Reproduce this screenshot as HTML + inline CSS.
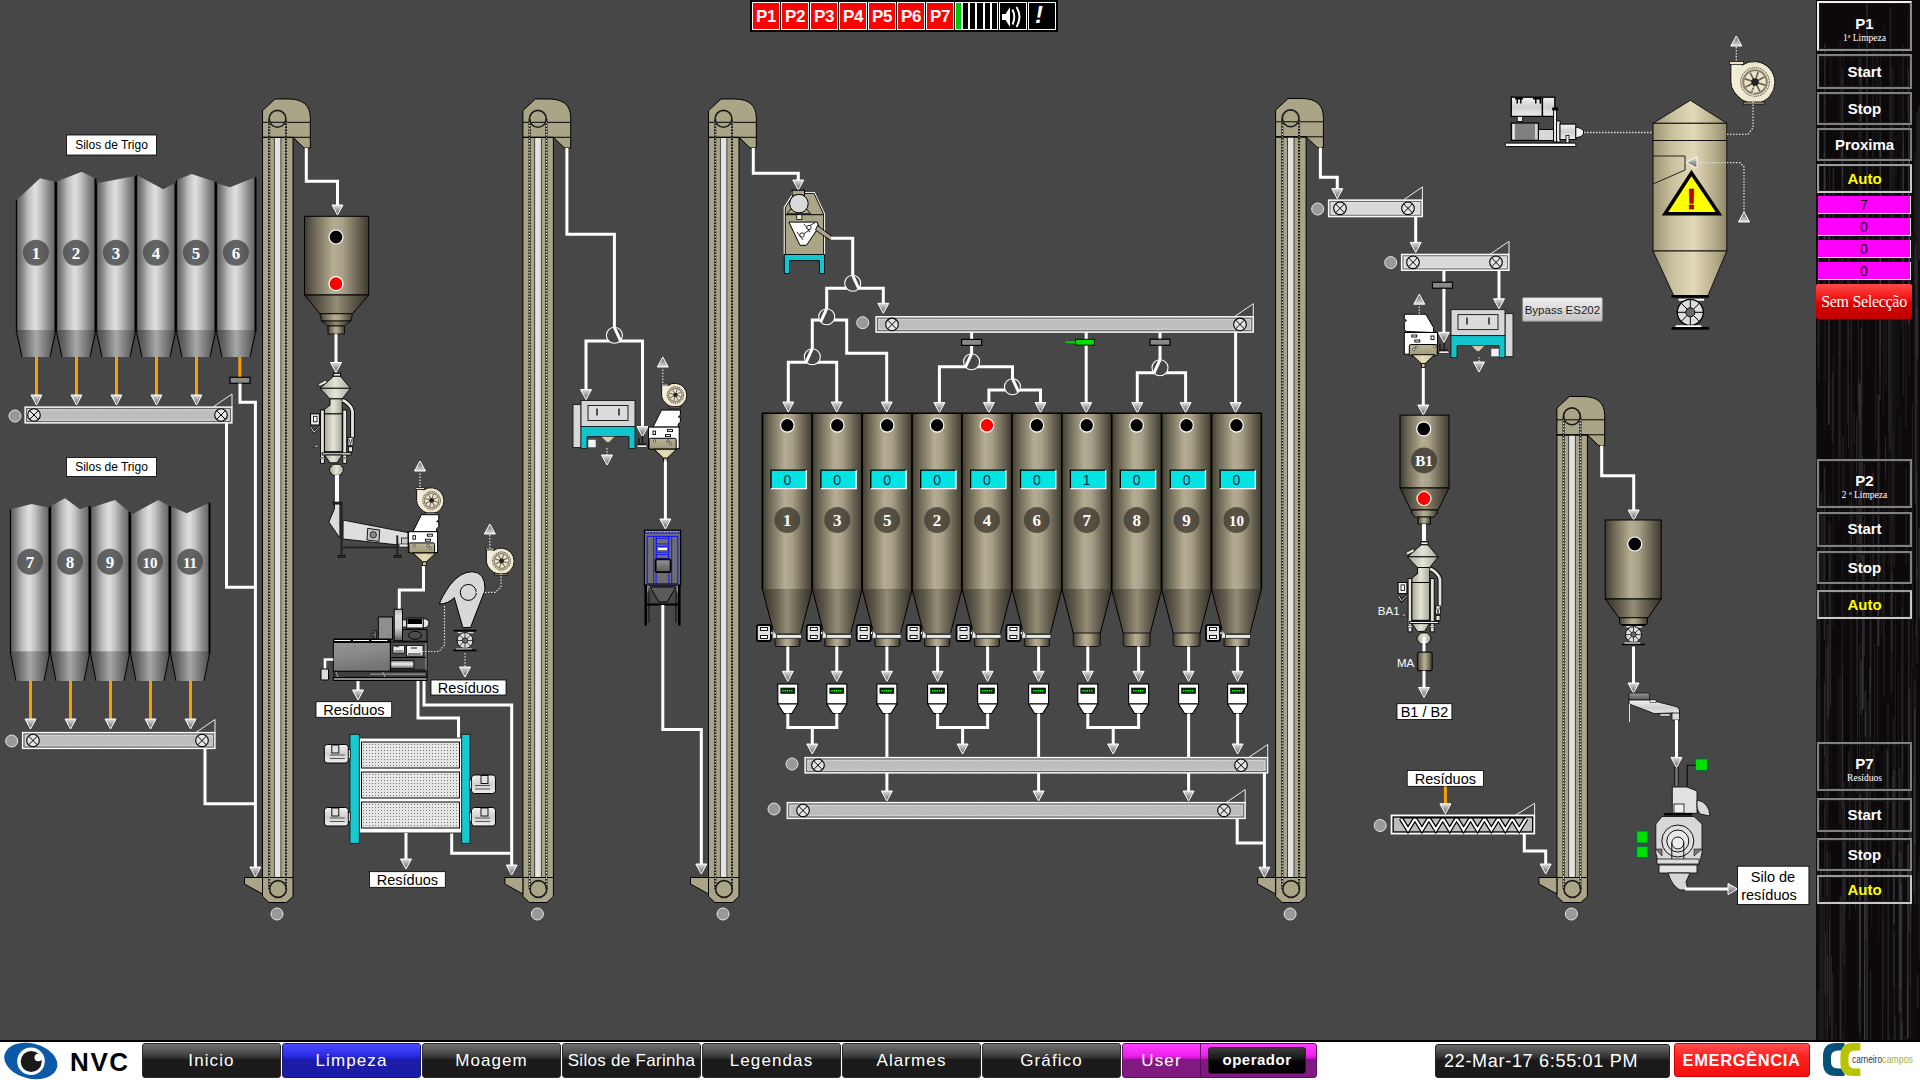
<!DOCTYPE html>
<html><head><meta charset="utf-8"><title>NVC Limpeza</title>
<style>
html,body{margin:0;padding:0;width:1920px;height:1080px;overflow:hidden;background:#474747;font-family:"Liberation Sans",sans-serif;}
#stage{position:absolute;left:0;top:0;width:1920px;height:1080px;}
svg{position:absolute;left:0;top:0;}
#topbar{position:absolute;left:750px;top:0;width:308px;height:32px;background:#000;}
.pb{position:absolute;top:2px;width:26px;height:26px;border:1px solid #fff;background:#f00;color:#fff;font:bold 17px/27px "Liberation Sans",sans-serif;text-align:center;letter-spacing:-0.5px;}
.lv{position:absolute;top:2px;width:5.1px;height:26px;border:1px solid #fff;background:#000;}
.lv.on{background:#00c800;}
.ib{position:absolute;top:2px;width:26px;height:26px;border:1px solid #fff;background:#000;overflow:hidden;}
.ib svg{position:absolute;left:0;top:0;}
#rpanel{position:absolute;left:1816px;top:0;width:104px;height:1040px;background-color:#0d090a;overflow:hidden;}
.rb{position:absolute;left:1817px;width:95px;box-sizing:border-box;border:2px solid #808080;background:transparent;color:#fff;font:bold 15px "Liberation Sans",sans-serif;text-align:center;box-shadow:inset 0 0 0 1px #1a1a1a;}
.rb.sel{border-color:#f0f0f0 #8a8a8a #8a8a8a #f0f0f0;}
.rb.sel2{border-color:#9a9a9a #c8c8c8 #c8c8c8 #9a9a9a;}
.rt{position:absolute;left:0;right:0;font:bold 15px/17px "Liberation Sans",sans-serif;}
.rs{position:absolute;left:0;right:0;font:9.5px/12px "Liberation Serif",serif;}
.mg{position:absolute;left:1818px;width:92px;height:17px;background:#ff00ff;border-right:1.5px solid #f4f4f4;border-bottom:1.5px solid #f4f4f4;color:#200020;font:14px/18px "Liberation Sans",sans-serif;text-align:center;}
#semsel{position:absolute;left:1816px;top:284px;width:96px;height:35px;border-radius:2px;background:linear-gradient(#ff4a4a 0%,#f01010 45%,#d80000 55%,#c00000 100%);color:#fff;font:16px/35px "Liberation Serif",serif;text-align:center;letter-spacing:-0.3px;}
#bbar{position:absolute;left:0;top:1040px;width:1920px;height:40px;background:#fff;border-top:2px solid #000;box-sizing:border-box;}
.nb{position:absolute;top:1043px;width:137px;height:33px;border:1px solid #2a2a2a;border-radius:3px;background:linear-gradient(#707070 0%,#505050 25%,#2c2c2c 44%,#1b1b1b 46%,#1b1b1b 100%);color:#fff;font:17px/34px "Liberation Sans",sans-serif;text-align:center;white-space:nowrap;}
.nb.blue{background:linear-gradient(#4a4aff 0%,#3030ee 30%,#2020c8 45%,#1c1ca8 47%,#1c1ca8 100%);border-color:#1a1a70;}
.nb.mag{background:linear-gradient(#ff40ff 0%,#ee20ee 35%,#c014c0 45%,#801a80 47%,#801a80 100%);border-color:#601060;}
.opdiv{position:absolute;left:77px;top:0;width:1px;height:33px;background:#5a0a5a;}
.op{position:absolute;left:85px;top:3px;width:96px;height:25px;border:1px solid #222;border-radius:3px;background:linear-gradient(#3a3a3a 0%,#1a1a1a 40%,#050005 55%,#050005 100%);color:#fff;font:bold 15px/24px "Liberation Sans",sans-serif;text-align:center;letter-spacing:0.5px;}
.datebox{position:absolute;left:1435px;top:1043.5px;width:233px;height:32px;border:1px solid #222;border-radius:3px;background:linear-gradient(#6a6a6a 0%,#4a4a4a 22%,#2a2a2a 42%,#1a1a1a 47%,#1a1a1a 100%);color:#fff;font:18px/33px "Liberation Sans",sans-serif;padding-left:8px;box-sizing:content-box;width:225px;letter-spacing:0.7px;}
.emerg{position:absolute;left:1673.5px;top:1043px;width:134px;height:32px;border:1px solid #d00;border-radius:3px;background:linear-gradient(#ff5050 0%,#ff2020 40%,#f01010 100%);color:#fff;font:bold 16.5px/33px "Liberation Sans",sans-serif;text-align:center;letter-spacing:0.6px;}

</style></head><body><div id="stage">
<svg width="1920" height="1080" viewBox="0 0 1920 1080" font-family="Liberation Sans">
<defs>
<linearGradient id="silv" x1="0" y1="0" x2="1" y2="0">
<stop offset="0" stop-color="#5e5e5e"/><stop offset="0.12" stop-color="#7c7c7c"/><stop offset="0.3" stop-color="#bdbdbd"/><stop offset="0.48" stop-color="#e0e0e0"/><stop offset="0.62" stop-color="#c4c4c4"/><stop offset="0.82" stop-color="#8a8a8a"/><stop offset="1" stop-color="#606060"/>
</linearGradient>
<linearGradient id="silvc" x1="0" y1="0" x2="1" y2="0">
<stop offset="0" stop-color="#4a4a4a"/><stop offset="0.2" stop-color="#666"/><stop offset="0.5" stop-color="#a8a8a8"/><stop offset="0.75" stop-color="#7a7a7a"/><stop offset="1" stop-color="#4a4a4a"/>
</linearGradient>
<linearGradient id="khak" x1="0" y1="0" x2="1" y2="0">
<stop offset="0" stop-color="#3f3c31"/><stop offset="0.15" stop-color="#6c6754"/><stop offset="0.45" stop-color="#b6ae93"/><stop offset="0.6" stop-color="#a8a087"/><stop offset="0.85" stop-color="#645f4e"/><stop offset="1" stop-color="#3d3a2f"/>
</linearGradient>
<linearGradient id="khakc" x1="0" y1="0" x2="1" y2="0">
<stop offset="0" stop-color="#36332a"/><stop offset="0.25" stop-color="#5d5849"/><stop offset="0.5" stop-color="#958d76"/><stop offset="0.75" stop-color="#5e594a"/><stop offset="1" stop-color="#35322a"/>
</linearGradient>
<linearGradient id="cream" x1="0" y1="0" x2="1" y2="0">
<stop offset="0" stop-color="#9c9272"/><stop offset="0.25" stop-color="#c8bf9d"/><stop offset="0.55" stop-color="#e2d9b8"/><stop offset="0.85" stop-color="#b4aa88"/><stop offset="1" stop-color="#8f8666"/>
</linearGradient>
<linearGradient id="arrg" x1="0" y1="0" x2="0" y2="1">
<stop offset="0" stop-color="#e0e0e0"/><stop offset="1" stop-color="#5c5c5c"/>
</linearGradient>
<linearGradient id="arrgu" x1="0" y1="1" x2="0" y2="0">
<stop offset="0" stop-color="#e0e0e0"/><stop offset="1" stop-color="#5c5c5c"/>
</linearGradient>
<linearGradient id="creamg" x1="0" y1="0" x2="1" y2="0">
<stop offset="0" stop-color="#9d9b8c"/><stop offset="0.45" stop-color="#e8e7dc"/><stop offset="1" stop-color="#a3a193"/>
</linearGradient>
<linearGradient id="fang" x1="0" y1="0" x2="1" y2="0">
<stop offset="0" stop-color="#f6f0da"/><stop offset="0.5" stop-color="#ebe4c8"/><stop offset="1" stop-color="#f2ecd6"/>
</linearGradient>
<linearGradient id="sepg" x1="0" y1="0" x2="1" y2="0">
<stop offset="0" stop-color="#a8a696"/><stop offset="0.5" stop-color="#e6e4d8"/><stop offset="1" stop-color="#a9a799"/>
</linearGradient>
<linearGradient id="panelg" x1="0" y1="0" x2="0" y2="1">
<stop offset="0" stop-color="#b8b494"/><stop offset="1" stop-color="#9e9a78"/>
</linearGradient>
<linearGradient id="funng" x1="0" y1="0" x2="1" y2="0">
<stop offset="0" stop-color="#cfc6a0"/><stop offset="0.5" stop-color="#e6ddb8"/><stop offset="1" stop-color="#c4bb94"/>
</linearGradient>
<linearGradient id="destg" x1="0" y1="0" x2="0.3" y2="1">
<stop offset="0" stop-color="#959595"/><stop offset="0.45" stop-color="#8a8a8a"/><stop offset="1" stop-color="#747474"/>
</linearGradient>
<linearGradient id="cylg" x1="0" y1="0" x2="0" y2="1">
<stop offset="0" stop-color="#777"/><stop offset="0.45" stop-color="#f2f2f2"/><stop offset="1" stop-color="#666"/>
</linearGradient>
<linearGradient id="diskg" x1="0" y1="0" x2="0" y2="1">
<stop offset="0" stop-color="#aaa"/><stop offset="0.2" stop-color="#ddd"/><stop offset="0.6" stop-color="#d0d0d0"/><stop offset="0.85" stop-color="#888"/><stop offset="1" stop-color="#555"/>
</linearGradient>
<linearGradient id="grayg" x1="0" y1="0" x2="0" y2="1">
<stop offset="0" stop-color="#999"/><stop offset="0.5" stop-color="#777"/><stop offset="1" stop-color="#5a5a5a"/>
</linearGradient>
<linearGradient id="motg" x1="0" y1="0" x2="0" y2="1">
<stop offset="0" stop-color="#f4f4f4"/><stop offset="0.5" stop-color="#cfcfcf"/><stop offset="1" stop-color="#eee"/>
</linearGradient>
<linearGradient id="btng" x1="0" y1="0" x2="0" y2="1">
<stop offset="0" stop-color="#f0f0f0"/><stop offset="1" stop-color="#c4c4c4"/>
</linearGradient>
<pattern id="dotpat" width="3" height="3" patternUnits="userSpaceOnUse">
<rect width="3" height="3" fill="#e6e6e6"/><rect width="1" height="1" fill="#777"/>
</pattern>
<pattern id="screwpat" width="1" height="1"><rect width="1" height="1" fill="none"/></pattern>
</defs>

<g stroke="#000" stroke-width="1">
<rect x="262.5" y="137.5" width="30.5" height="740" fill="#aba588"/>
</g>
<rect x="274.3" y="137.5" width="6.6" height="740" fill="#e2e2e2" stroke="#222" stroke-width="0.8"/>
<line x1="269.2" y1="119" x2="269.2" y2="888.5" stroke="#111" stroke-width="2"/>
<line x1="269.2" y1="119" x2="269.2" y2="888.5" stroke="#fff" stroke-width="1" stroke-dasharray="1.5 1.5"/>
<line x1="286" y1="119" x2="286" y2="888.5" stroke="#111" stroke-width="2"/>
<line x1="286" y1="119" x2="286" y2="888.5" stroke="#fff" stroke-width="1" stroke-dasharray="1.5 1.5"/>
<path d="M262.5,110.6 L275,99 L288.5,99 Q310.3,99 310.3,118 L310.3,148 L304.2,148 L293,137.3 L262.5,137.3 Z" fill="#aba588" stroke="#000" stroke-width="1"/>
<line x1="262.5" y1="122.3" x2="310.3" y2="122.3" stroke="#000" stroke-width="1"/>
<line x1="262.5" y1="137.3" x2="310.3" y2="137.3" stroke="#000" stroke-width="1"/>
<line x1="269.2" y1="119" x2="269.2" y2="137.5" stroke="#111" stroke-width="2"/>
<line x1="269.2" y1="119" x2="269.2" y2="137.5" stroke="#fff" stroke-width="1" stroke-dasharray="1.5 1.5"/>
<line x1="286" y1="119" x2="286" y2="137.5" stroke="#111" stroke-width="2"/>
<line x1="286" y1="119" x2="286" y2="137.5" stroke="#fff" stroke-width="1" stroke-dasharray="1.5 1.5"/>
<circle cx="277.5" cy="118.8" r="8.4" fill="none" stroke="#1a1a1a" stroke-width="1.6"/>
<path d="M262.5,877.5 L293,877.5 L293,896.5 L286.5,902.5 L269,902.5 L262.5,896.5 Z" fill="#aba588" stroke="#000" stroke-width="1"/>
<path d="M244.5,877.5 L262.5,877.5 L262.5,894 L244.5,884 Z" fill="#aba588" stroke="#000" stroke-width="1"/>
<line x1="269.2" y1="877.5" x2="269.2" y2="889" stroke="#111" stroke-width="2"/>
<line x1="269.2" y1="877.5" x2="269.2" y2="889" stroke="#fff" stroke-width="1" stroke-dasharray="1.5 1.5"/>
<line x1="286" y1="877.5" x2="286" y2="889" stroke="#111" stroke-width="2"/>
<line x1="286" y1="877.5" x2="286" y2="889" stroke="#fff" stroke-width="1" stroke-dasharray="1.5 1.5"/>
<circle cx="278" cy="889" r="8.4" fill="none" stroke="#1a1a1a" stroke-width="1.6"/>
<circle cx="277" cy="914" r="6" fill="#999" stroke="#e6e6e6" stroke-width="1"/>
<g stroke="#000" stroke-width="1">
<rect x="522.9" y="137.5" width="30.5" height="740" fill="#aba588"/>
</g>
<rect x="534.7" y="137.5" width="6.6" height="740" fill="#e2e2e2" stroke="#222" stroke-width="0.8"/>
<line x1="529.6" y1="119" x2="529.6" y2="888.5" stroke="#111" stroke-width="2"/>
<line x1="529.6" y1="119" x2="529.6" y2="888.5" stroke="#fff" stroke-width="1" stroke-dasharray="1.5 1.5"/>
<line x1="546.4" y1="119" x2="546.4" y2="888.5" stroke="#111" stroke-width="2"/>
<line x1="546.4" y1="119" x2="546.4" y2="888.5" stroke="#fff" stroke-width="1" stroke-dasharray="1.5 1.5"/>
<path d="M522.9,110.6 L535.4,99 L548.9,99 Q570.7,99 570.7,118 L570.7,148 L564.6,148 L553.4,137.3 L522.9,137.3 Z" fill="#aba588" stroke="#000" stroke-width="1"/>
<line x1="522.9" y1="122.3" x2="570.7" y2="122.3" stroke="#000" stroke-width="1"/>
<line x1="522.9" y1="137.3" x2="570.7" y2="137.3" stroke="#000" stroke-width="1"/>
<line x1="529.6" y1="119" x2="529.6" y2="137.5" stroke="#111" stroke-width="2"/>
<line x1="529.6" y1="119" x2="529.6" y2="137.5" stroke="#fff" stroke-width="1" stroke-dasharray="1.5 1.5"/>
<line x1="546.4" y1="119" x2="546.4" y2="137.5" stroke="#111" stroke-width="2"/>
<line x1="546.4" y1="119" x2="546.4" y2="137.5" stroke="#fff" stroke-width="1" stroke-dasharray="1.5 1.5"/>
<circle cx="537.9" cy="118.8" r="8.4" fill="none" stroke="#1a1a1a" stroke-width="1.6"/>
<path d="M522.9,877.5 L553.4,877.5 L553.4,896.5 L546.9,902.5 L529.4,902.5 L522.9,896.5 Z" fill="#aba588" stroke="#000" stroke-width="1"/>
<path d="M504.9,877.5 L522.9,877.5 L522.9,894 L504.9,884 Z" fill="#aba588" stroke="#000" stroke-width="1"/>
<line x1="529.6" y1="877.5" x2="529.6" y2="889" stroke="#111" stroke-width="2"/>
<line x1="529.6" y1="877.5" x2="529.6" y2="889" stroke="#fff" stroke-width="1" stroke-dasharray="1.5 1.5"/>
<line x1="546.4" y1="877.5" x2="546.4" y2="889" stroke="#111" stroke-width="2"/>
<line x1="546.4" y1="877.5" x2="546.4" y2="889" stroke="#fff" stroke-width="1" stroke-dasharray="1.5 1.5"/>
<circle cx="538.4" cy="889" r="8.4" fill="none" stroke="#1a1a1a" stroke-width="1.6"/>
<circle cx="537.4" cy="914" r="6" fill="#999" stroke="#e6e6e6" stroke-width="1"/>
<g stroke="#000" stroke-width="1">
<rect x="708.5" y="137.5" width="30.5" height="740" fill="#aba588"/>
</g>
<rect x="720.3" y="137.5" width="6.6" height="740" fill="#e2e2e2" stroke="#222" stroke-width="0.8"/>
<line x1="715.2" y1="119" x2="715.2" y2="888.5" stroke="#111" stroke-width="2"/>
<line x1="715.2" y1="119" x2="715.2" y2="888.5" stroke="#fff" stroke-width="1" stroke-dasharray="1.5 1.5"/>
<line x1="732" y1="119" x2="732" y2="888.5" stroke="#111" stroke-width="2"/>
<line x1="732" y1="119" x2="732" y2="888.5" stroke="#fff" stroke-width="1" stroke-dasharray="1.5 1.5"/>
<path d="M708.5,110.6 L721,99 L734.5,99 Q756.3,99 756.3,118 L756.3,148 L750.2,148 L739,137.3 L708.5,137.3 Z" fill="#aba588" stroke="#000" stroke-width="1"/>
<line x1="708.5" y1="122.3" x2="756.3" y2="122.3" stroke="#000" stroke-width="1"/>
<line x1="708.5" y1="137.3" x2="756.3" y2="137.3" stroke="#000" stroke-width="1"/>
<line x1="715.2" y1="119" x2="715.2" y2="137.5" stroke="#111" stroke-width="2"/>
<line x1="715.2" y1="119" x2="715.2" y2="137.5" stroke="#fff" stroke-width="1" stroke-dasharray="1.5 1.5"/>
<line x1="732" y1="119" x2="732" y2="137.5" stroke="#111" stroke-width="2"/>
<line x1="732" y1="119" x2="732" y2="137.5" stroke="#fff" stroke-width="1" stroke-dasharray="1.5 1.5"/>
<circle cx="723.5" cy="118.8" r="8.4" fill="none" stroke="#1a1a1a" stroke-width="1.6"/>
<path d="M708.5,877.5 L739,877.5 L739,896.5 L732.5,902.5 L715,902.5 L708.5,896.5 Z" fill="#aba588" stroke="#000" stroke-width="1"/>
<path d="M690.5,877.5 L708.5,877.5 L708.5,894 L690.5,884 Z" fill="#aba588" stroke="#000" stroke-width="1"/>
<line x1="715.2" y1="877.5" x2="715.2" y2="889" stroke="#111" stroke-width="2"/>
<line x1="715.2" y1="877.5" x2="715.2" y2="889" stroke="#fff" stroke-width="1" stroke-dasharray="1.5 1.5"/>
<line x1="732" y1="877.5" x2="732" y2="889" stroke="#111" stroke-width="2"/>
<line x1="732" y1="877.5" x2="732" y2="889" stroke="#fff" stroke-width="1" stroke-dasharray="1.5 1.5"/>
<circle cx="724" cy="889" r="8.4" fill="none" stroke="#1a1a1a" stroke-width="1.6"/>
<circle cx="723" cy="914" r="6" fill="#999" stroke="#e6e6e6" stroke-width="1"/>
<g stroke="#000" stroke-width="1">
<rect x="1275.6" y="137" width="30.5" height="740.5" fill="#aba588"/>
</g>
<rect x="1287.4" y="137" width="6.6" height="740.5" fill="#e2e2e2" stroke="#222" stroke-width="0.8"/>
<line x1="1282.3" y1="118.5" x2="1282.3" y2="888.5" stroke="#111" stroke-width="2"/>
<line x1="1282.3" y1="118.5" x2="1282.3" y2="888.5" stroke="#fff" stroke-width="1" stroke-dasharray="1.5 1.5"/>
<line x1="1299.1" y1="118.5" x2="1299.1" y2="888.5" stroke="#111" stroke-width="2"/>
<line x1="1299.1" y1="118.5" x2="1299.1" y2="888.5" stroke="#fff" stroke-width="1" stroke-dasharray="1.5 1.5"/>
<path d="M1275.6,110.1 L1288.1,98.5 L1301.6,98.5 Q1323.4,98.5 1323.4,117.5 L1323.4,147.5 L1317.3,147.5 L1306.1,136.8 L1275.6,136.8 Z" fill="#aba588" stroke="#000" stroke-width="1"/>
<line x1="1275.6" y1="121.8" x2="1323.4" y2="121.8" stroke="#000" stroke-width="1"/>
<line x1="1275.6" y1="136.8" x2="1323.4" y2="136.8" stroke="#000" stroke-width="1"/>
<line x1="1282.3" y1="118.5" x2="1282.3" y2="137" stroke="#111" stroke-width="2"/>
<line x1="1282.3" y1="118.5" x2="1282.3" y2="137" stroke="#fff" stroke-width="1" stroke-dasharray="1.5 1.5"/>
<line x1="1299.1" y1="118.5" x2="1299.1" y2="137" stroke="#111" stroke-width="2"/>
<line x1="1299.1" y1="118.5" x2="1299.1" y2="137" stroke="#fff" stroke-width="1" stroke-dasharray="1.5 1.5"/>
<circle cx="1290.6" cy="118.3" r="8.4" fill="none" stroke="#1a1a1a" stroke-width="1.6"/>
<path d="M1275.6,877.5 L1306.1,877.5 L1306.1,896.5 L1299.6,902.5 L1282.1,902.5 L1275.6,896.5 Z" fill="#aba588" stroke="#000" stroke-width="1"/>
<path d="M1257.6,877.5 L1275.6,877.5 L1275.6,894 L1257.6,884 Z" fill="#aba588" stroke="#000" stroke-width="1"/>
<line x1="1282.3" y1="877.5" x2="1282.3" y2="889" stroke="#111" stroke-width="2"/>
<line x1="1282.3" y1="877.5" x2="1282.3" y2="889" stroke="#fff" stroke-width="1" stroke-dasharray="1.5 1.5"/>
<line x1="1299.1" y1="877.5" x2="1299.1" y2="889" stroke="#111" stroke-width="2"/>
<line x1="1299.1" y1="877.5" x2="1299.1" y2="889" stroke="#fff" stroke-width="1" stroke-dasharray="1.5 1.5"/>
<circle cx="1291.1" cy="889" r="8.4" fill="none" stroke="#1a1a1a" stroke-width="1.6"/>
<circle cx="1290.1" cy="914" r="6" fill="#999" stroke="#e6e6e6" stroke-width="1"/>
<g stroke="#000" stroke-width="1">
<rect x="1556.9" y="435" width="30.5" height="442.5" fill="#aba588"/>
</g>
<rect x="1568.7" y="435" width="6.6" height="442.5" fill="#e2e2e2" stroke="#222" stroke-width="0.8"/>
<line x1="1563.6" y1="416.5" x2="1563.6" y2="888.5" stroke="#111" stroke-width="2"/>
<line x1="1563.6" y1="416.5" x2="1563.6" y2="888.5" stroke="#fff" stroke-width="1" stroke-dasharray="1.5 1.5"/>
<line x1="1580.4" y1="416.5" x2="1580.4" y2="888.5" stroke="#111" stroke-width="2"/>
<line x1="1580.4" y1="416.5" x2="1580.4" y2="888.5" stroke="#fff" stroke-width="1" stroke-dasharray="1.5 1.5"/>
<path d="M1556.9,408.1 L1569.4,396.5 L1582.9,396.5 Q1604.7,396.5 1604.7,415.5 L1604.7,445.5 L1598.6,445.5 L1587.4,434.8 L1556.9,434.8 Z" fill="#aba588" stroke="#000" stroke-width="1"/>
<line x1="1556.9" y1="419.8" x2="1604.7" y2="419.8" stroke="#000" stroke-width="1"/>
<line x1="1556.9" y1="434.8" x2="1604.7" y2="434.8" stroke="#000" stroke-width="1"/>
<line x1="1563.6" y1="416.5" x2="1563.6" y2="435" stroke="#111" stroke-width="2"/>
<line x1="1563.6" y1="416.5" x2="1563.6" y2="435" stroke="#fff" stroke-width="1" stroke-dasharray="1.5 1.5"/>
<line x1="1580.4" y1="416.5" x2="1580.4" y2="435" stroke="#111" stroke-width="2"/>
<line x1="1580.4" y1="416.5" x2="1580.4" y2="435" stroke="#fff" stroke-width="1" stroke-dasharray="1.5 1.5"/>
<circle cx="1571.9" cy="416.3" r="8.4" fill="none" stroke="#1a1a1a" stroke-width="1.6"/>
<path d="M1556.9,877.5 L1587.4,877.5 L1587.4,896.5 L1580.9,902.5 L1563.4,902.5 L1556.9,896.5 Z" fill="#aba588" stroke="#000" stroke-width="1"/>
<path d="M1538.9,877.5 L1556.9,877.5 L1556.9,894 L1538.9,884 Z" fill="#aba588" stroke="#000" stroke-width="1"/>
<line x1="1563.6" y1="877.5" x2="1563.6" y2="889" stroke="#111" stroke-width="2"/>
<line x1="1563.6" y1="877.5" x2="1563.6" y2="889" stroke="#fff" stroke-width="1" stroke-dasharray="1.5 1.5"/>
<line x1="1580.4" y1="877.5" x2="1580.4" y2="889" stroke="#111" stroke-width="2"/>
<line x1="1580.4" y1="877.5" x2="1580.4" y2="889" stroke="#fff" stroke-width="1" stroke-dasharray="1.5 1.5"/>
<circle cx="1572.4" cy="889" r="8.4" fill="none" stroke="#1a1a1a" stroke-width="1.6"/>
<circle cx="1571.4" cy="914" r="6" fill="#999" stroke="#e6e6e6" stroke-width="1"/>
<polygon points="16.5,330 16.7,200 40,178.3 55,181.7 55.5,330" fill="url(#silv)"/>
<polygon points="16.5,330 55.5,330 50,357 22,357" fill="url(#silvc)"/>
<line x1="16.5" y1="200" x2="16.5" y2="332" stroke="#000" stroke-width="1.3"/>
<line x1="55.5" y1="181.7" x2="55.5" y2="332" stroke="#000" stroke-width="2"/>
<polyline points="16.5,332 22,357" fill="none" stroke="#000" stroke-width="1"/>
<polyline points="55.5,332 50,357" fill="none" stroke="#000" stroke-width="1"/>
<circle cx="36" cy="252.7" r="13" fill="#4a4a4a" fill-opacity="0.82"/>
<text x="36" y="258.7" text-anchor="middle" font-family="Liberation Serif" font-weight="bold" font-size="17" fill="#fff">1</text>
<polygon points="56.5,330 56,181.7 81.7,171.7 95,178.3 95.5,330" fill="url(#silv)"/>
<polygon points="56.5,330 95.5,330 90,357 62,357" fill="url(#silvc)"/>
<line x1="56.5" y1="181.7" x2="56.5" y2="332" stroke="#000" stroke-width="1.3"/>
<line x1="95.5" y1="178.3" x2="95.5" y2="332" stroke="#000" stroke-width="2"/>
<polyline points="56.5,332 62,357" fill="none" stroke="#000" stroke-width="1"/>
<polyline points="95.5,332 90,357" fill="none" stroke="#000" stroke-width="1"/>
<circle cx="76" cy="252.7" r="13" fill="#4a4a4a" fill-opacity="0.82"/>
<text x="76" y="258.7" text-anchor="middle" font-family="Liberation Serif" font-weight="bold" font-size="17" fill="#fff">2</text>
<polygon points="96.5,330 96.7,183.3 135,176 135.5,330" fill="url(#silv)"/>
<polygon points="96.5,330 135.5,330 130,357 102,357" fill="url(#silvc)"/>
<line x1="96.5" y1="183.3" x2="96.5" y2="332" stroke="#000" stroke-width="1.3"/>
<line x1="135.5" y1="176" x2="135.5" y2="332" stroke="#000" stroke-width="2"/>
<polyline points="96.5,332 102,357" fill="none" stroke="#000" stroke-width="1"/>
<polyline points="135.5,332 130,357" fill="none" stroke="#000" stroke-width="1"/>
<circle cx="116" cy="252.7" r="13" fill="#4a4a4a" fill-opacity="0.82"/>
<text x="116" y="258.7" text-anchor="middle" font-family="Liberation Serif" font-weight="bold" font-size="17" fill="#fff">3</text>
<polygon points="136.5,330 136.7,175 163.3,189.3 175,183.3 175.5,330" fill="url(#silv)"/>
<polygon points="136.5,330 175.5,330 170,357 142,357" fill="url(#silvc)"/>
<line x1="136.5" y1="175" x2="136.5" y2="332" stroke="#000" stroke-width="1.3"/>
<line x1="175.5" y1="183.3" x2="175.5" y2="332" stroke="#000" stroke-width="2"/>
<polyline points="136.5,332 142,357" fill="none" stroke="#000" stroke-width="1"/>
<polyline points="175.5,332 170,357" fill="none" stroke="#000" stroke-width="1"/>
<circle cx="156" cy="252.7" r="13" fill="#4a4a4a" fill-opacity="0.82"/>
<text x="156" y="258.7" text-anchor="middle" font-family="Liberation Serif" font-weight="bold" font-size="17" fill="#fff">4</text>
<polygon points="176.5,330 176.7,180 191.7,174 215,181.7 215.5,330" fill="url(#silv)"/>
<polygon points="176.5,330 215.5,330 210,357 182,357" fill="url(#silvc)"/>
<line x1="176.5" y1="180" x2="176.5" y2="332" stroke="#000" stroke-width="1.3"/>
<line x1="215.5" y1="181.7" x2="215.5" y2="332" stroke="#000" stroke-width="2"/>
<polyline points="176.5,332 182,357" fill="none" stroke="#000" stroke-width="1"/>
<polyline points="215.5,332 210,357" fill="none" stroke="#000" stroke-width="1"/>
<circle cx="196" cy="252.7" r="13" fill="#4a4a4a" fill-opacity="0.82"/>
<text x="196" y="258.7" text-anchor="middle" font-family="Liberation Serif" font-weight="bold" font-size="17" fill="#fff">5</text>
<polygon points="216.5,330 216.7,183.3 230,187.3 255,177.3 255.5,330" fill="url(#silv)"/>
<polygon points="216.5,330 255.5,330 250,357 222,357" fill="url(#silvc)"/>
<line x1="216.5" y1="183.3" x2="216.5" y2="332" stroke="#000" stroke-width="1.3"/>
<line x1="255.5" y1="177.3" x2="255.5" y2="332" stroke="#000" stroke-width="2"/>
<polyline points="216.5,332 222,357" fill="none" stroke="#000" stroke-width="1"/>
<polyline points="255.5,332 250,357" fill="none" stroke="#000" stroke-width="1"/>
<circle cx="236" cy="252.7" r="13" fill="#4a4a4a" fill-opacity="0.82"/>
<text x="236" y="258.7" text-anchor="middle" font-family="Liberation Serif" font-weight="bold" font-size="17" fill="#fff">6</text>
<polygon points="10.5,651.7 10.7,509.3 31.7,504 49.3,507.7 49.5,651.7" fill="url(#silv)"/>
<polygon points="10.5,651.7 49.5,651.7 44,681 16,681" fill="url(#silvc)"/>
<line x1="10.5" y1="509.3" x2="10.5" y2="653.7" stroke="#000" stroke-width="1.3"/>
<line x1="49.5" y1="507.7" x2="49.5" y2="653.7" stroke="#000" stroke-width="2"/>
<polyline points="10.5,653.7 16,681" fill="none" stroke="#000" stroke-width="1"/>
<polyline points="49.5,653.7 44,681" fill="none" stroke="#000" stroke-width="1"/>
<circle cx="30" cy="561.7" r="13" fill="#4a4a4a" fill-opacity="0.82"/>
<text x="30" y="567.7" text-anchor="middle" font-family="Liberation Serif" font-weight="bold" font-size="17" fill="#fff">7</text>
<polygon points="50.5,651.7 50.7,506 65,498.3 80,509.3 89.3,506 89.5,651.7" fill="url(#silv)"/>
<polygon points="50.5,651.7 89.5,651.7 84,681 56,681" fill="url(#silvc)"/>
<line x1="50.5" y1="506" x2="50.5" y2="653.7" stroke="#000" stroke-width="1.3"/>
<line x1="89.5" y1="506" x2="89.5" y2="653.7" stroke="#000" stroke-width="2"/>
<polyline points="50.5,653.7 56,681" fill="none" stroke="#000" stroke-width="1"/>
<polyline points="89.5,653.7 84,681" fill="none" stroke="#000" stroke-width="1"/>
<circle cx="70" cy="561.7" r="13" fill="#4a4a4a" fill-opacity="0.82"/>
<text x="70" y="567.7" text-anchor="middle" font-family="Liberation Serif" font-weight="bold" font-size="17" fill="#fff">8</text>
<polygon points="90.5,651.7 90.7,507.7 115,500 129.3,511.7 129.5,651.7" fill="url(#silv)"/>
<polygon points="90.5,651.7 129.5,651.7 124,681 96,681" fill="url(#silvc)"/>
<line x1="90.5" y1="507.7" x2="90.5" y2="653.7" stroke="#000" stroke-width="1.3"/>
<line x1="129.5" y1="511.7" x2="129.5" y2="653.7" stroke="#000" stroke-width="2"/>
<polyline points="90.5,653.7 96,681" fill="none" stroke="#000" stroke-width="1"/>
<polyline points="129.5,653.7 124,681" fill="none" stroke="#000" stroke-width="1"/>
<circle cx="110" cy="561.7" r="13" fill="#4a4a4a" fill-opacity="0.82"/>
<text x="110" y="567.7" text-anchor="middle" font-family="Liberation Serif" font-weight="bold" font-size="17" fill="#fff">9</text>
<polygon points="130.5,651.7 130.7,515 158.3,500 169.3,506 169.5,651.7" fill="url(#silv)"/>
<polygon points="130.5,651.7 169.5,651.7 164,681 136,681" fill="url(#silvc)"/>
<line x1="130.5" y1="515" x2="130.5" y2="653.7" stroke="#000" stroke-width="1.3"/>
<line x1="169.5" y1="506" x2="169.5" y2="653.7" stroke="#000" stroke-width="2"/>
<polyline points="130.5,653.7 136,681" fill="none" stroke="#000" stroke-width="1"/>
<polyline points="169.5,653.7 164,681" fill="none" stroke="#000" stroke-width="1"/>
<circle cx="150" cy="561.7" r="13" fill="#4a4a4a" fill-opacity="0.82"/>
<text x="150" y="567.7" text-anchor="middle" font-family="Liberation Serif" font-weight="bold" font-size="15" fill="#fff">10</text>
<polygon points="170.5,651.7 170.7,506 186.7,513.3 209.3,502.7 209.5,651.7" fill="url(#silv)"/>
<polygon points="170.5,651.7 209.5,651.7 204,681 176,681" fill="url(#silvc)"/>
<line x1="170.5" y1="506" x2="170.5" y2="653.7" stroke="#000" stroke-width="1.3"/>
<line x1="209.5" y1="502.7" x2="209.5" y2="653.7" stroke="#000" stroke-width="2"/>
<polyline points="170.5,653.7 176,681" fill="none" stroke="#000" stroke-width="1"/>
<polyline points="209.5,653.7 204,681" fill="none" stroke="#000" stroke-width="1"/>
<circle cx="190" cy="561.7" r="13" fill="#4a4a4a" fill-opacity="0.82"/>
<text x="190" y="567.7" text-anchor="middle" font-family="Liberation Serif" font-weight="bold" font-size="15" fill="#fff">11</text>
<rect x="66.5" y="135" width="90" height="20" fill="#fff" stroke="#000" stroke-width="0.8"/>
<text x="111.5" y="149.32" text-anchor="middle" font-family="Liberation Sans" font-size="12" fill="#000">Silos de Trigo</text>
<rect x="66.5" y="457.5" width="90" height="19" fill="#fff" stroke="#000" stroke-width="0.8"/>
<text x="111.5" y="471.32" text-anchor="middle" font-family="Liberation Sans" font-size="12" fill="#000">Silos de Trigo</text>
<line x1="36.5" y1="357" x2="36.5" y2="396" stroke="#f5a000" stroke-width="3"/>
<polygon points="31,395 42,395 36.5,405" fill="url(#arrg)" stroke="#fff" stroke-width="1"/>
<line x1="76.5" y1="357" x2="76.5" y2="396" stroke="#f5a000" stroke-width="3"/>
<polygon points="71,395 82,395 76.5,405" fill="url(#arrg)" stroke="#fff" stroke-width="1"/>
<line x1="116.5" y1="357" x2="116.5" y2="396" stroke="#f5a000" stroke-width="3"/>
<polygon points="111,395 122,395 116.5,405" fill="url(#arrg)" stroke="#fff" stroke-width="1"/>
<line x1="156.5" y1="357" x2="156.5" y2="396" stroke="#f5a000" stroke-width="3"/>
<polygon points="151,395 162,395 156.5,405" fill="url(#arrg)" stroke="#fff" stroke-width="1"/>
<line x1="196.5" y1="357" x2="196.5" y2="396" stroke="#f5a000" stroke-width="3"/>
<polygon points="191,395 202,395 196.5,405" fill="url(#arrg)" stroke="#fff" stroke-width="1"/>
<line x1="239.8" y1="357" x2="239.8" y2="378" stroke="#f5a000" stroke-width="3"/>
<line x1="30.5" y1="681" x2="30.5" y2="720" stroke="#f5a000" stroke-width="3"/>
<polygon points="25,719 36,719 30.5,729" fill="url(#arrg)" stroke="#fff" stroke-width="1"/>
<line x1="70.5" y1="681" x2="70.5" y2="720" stroke="#f5a000" stroke-width="3"/>
<polygon points="65,719 76,719 70.5,729" fill="url(#arrg)" stroke="#fff" stroke-width="1"/>
<line x1="110.5" y1="681" x2="110.5" y2="720" stroke="#f5a000" stroke-width="3"/>
<polygon points="105,719 116,719 110.5,729" fill="url(#arrg)" stroke="#fff" stroke-width="1"/>
<line x1="150.5" y1="681" x2="150.5" y2="720" stroke="#f5a000" stroke-width="3"/>
<polygon points="145,719 156,719 150.5,729" fill="url(#arrg)" stroke="#fff" stroke-width="1"/>
<line x1="190.5" y1="681" x2="190.5" y2="720" stroke="#f5a000" stroke-width="3"/>
<polygon points="185,719 196,719 190.5,729" fill="url(#arrg)" stroke="#fff" stroke-width="1"/>
<rect x="25" y="407" width="207" height="16" fill="#bdbdbd" stroke="#fff" stroke-width="1.2"/>
<rect x="26.5" y="408.5" width="204" height="13" fill="none" stroke="#555" stroke-width="0.8"/>
<rect x="28" y="410" width="201" height="10" fill="none" stroke="#f4f4f4" stroke-width="0.8" stroke-dasharray="1 1.2"/>
<circle cx="34" cy="415" r="6.3" fill="#e4e4e4" stroke="#000" stroke-width="1.1"/>
<path d="M29.7,410.7 L38.3,419.3 M29.7,419.3 L38.3,410.7" stroke="#000" stroke-width="1"/>
<circle cx="221" cy="415" r="6.3" fill="#e4e4e4" stroke="#000" stroke-width="1.1"/>
<path d="M216.7,410.7 L225.3,419.3 M216.7,419.3 L225.3,410.7" stroke="#000" stroke-width="1"/>
<polyline points="213,407 232,394 232,407" fill="none" stroke="#eee" stroke-width="1"/>
<circle cx="15" cy="416" r="6" fill="#999" stroke="#e6e6e6" stroke-width="1"/>
<rect x="22.5" y="732.5" width="192.5" height="16" fill="#bdbdbd" stroke="#fff" stroke-width="1.2"/>
<rect x="24" y="734" width="189.5" height="13" fill="none" stroke="#555" stroke-width="0.8"/>
<rect x="25.5" y="735.5" width="186.5" height="10" fill="none" stroke="#f4f4f4" stroke-width="0.8" stroke-dasharray="1 1.2"/>
<circle cx="33" cy="740.5" r="6.3" fill="#e4e4e4" stroke="#000" stroke-width="1.1"/>
<path d="M28.7,736.2 L37.3,744.8 M28.7,744.8 L37.3,736.2" stroke="#000" stroke-width="1"/>
<circle cx="202" cy="740.5" r="6.3" fill="#e4e4e4" stroke="#000" stroke-width="1.1"/>
<path d="M197.7,736.2 L206.3,744.8 M197.7,744.8 L206.3,736.2" stroke="#000" stroke-width="1"/>
<polyline points="196,732.5 215,719.5 215,732.5" fill="none" stroke="#eee" stroke-width="1"/>
<circle cx="11.7" cy="741" r="6" fill="#999" stroke="#e6e6e6" stroke-width="1"/>
<rect x="230" y="377.3" width="20" height="6" fill="#888" stroke="#000" stroke-width="1.2" />
<polyline points="240,383.5 240,402.2 255.4,402.2 255.4,868" fill="none" stroke="#ffffff" stroke-width="3" stroke-linejoin="miter" stroke-linecap="butt"/>
<polygon points="249.9,867 260.9,867 255.4,877" fill="url(#arrg)" stroke="#fff" stroke-width="1"/>
<polyline points="226.5,423 226.5,587.2 255.4,587.2" fill="none" stroke="#ffffff" stroke-width="3" stroke-linejoin="miter" stroke-linecap="butt"/>
<polyline points="205,748.5 205,803.7 255.4,803.7" fill="none" stroke="#ffffff" stroke-width="3" stroke-linejoin="miter" stroke-linecap="butt"/>
<polyline points="306.3,148 306.3,181.3 337.5,181.3 337.5,206" fill="none" stroke="#ffffff" stroke-width="3" stroke-linejoin="miter" stroke-linecap="butt"/>
<polygon points="332,205 343,205 337.5,215" fill="url(#arrg)" stroke="#fff" stroke-width="1"/>
<rect x="304.5" y="216.3" width="64.2" height="78.7" fill="url(#khak)" stroke="#000" stroke-width="1" />
<polygon points="304.5,295 368.7,295 352.5,313.8 320,313.8" fill="url(#khakc)" stroke="#000" stroke-width="1" />
<polygon points="320,313.8 352.5,313.8 351,321 321.5,321" fill="url(#khak)" stroke="#000" stroke-width="0.8" />
<polygon points="321.5,321 351,321 344.5,326 328,326" fill="url(#khakc)" stroke="#000" stroke-width="0.8" />
<rect x="328" y="326" width="16.5" height="8" fill="url(#khak)" stroke="#000" stroke-width="0.8" />
<circle cx="336" cy="237" r="7" fill="#000" stroke="#fff" stroke-width="1.2"/>
<circle cx="336" cy="283.7" r="7" fill="#f00" stroke="#fff" stroke-width="1.2"/>
<polyline points="336,334 336,363.5" fill="none" stroke="#ffffff" stroke-width="3" stroke-linejoin="miter" stroke-linecap="butt"/>
<polygon points="330.5,362.5 341.5,362.5 336,372.5" fill="url(#arrg)" stroke="#fff" stroke-width="1"/>
<rect x="320.6" y="410" width="3.8" height="53.3" fill="#e4e3da" stroke="#000" stroke-width="0.9" />
<rect x="342.8" y="410" width="3.9" height="53.3" fill="#e4e3da" stroke="#000" stroke-width="0.9" />
<polygon points="333.8,376.1 340.2,376.1 350.6,388.3 320,388.3" fill="url(#sepg)" stroke="#000" stroke-width="0.9" />
<polygon points="320,388.3 350.6,388.3 342.2,398.9 330,398.9" fill="url(#sepg)" stroke="#000" stroke-width="0.9" />
<rect x="333.3" y="373.3" width="7.3" height="2.8" fill="#eee" stroke="#000" stroke-width="1" />
<polygon points="318,384.3 326,379.8 327,382.8 320,386.3" fill="#e8e8e0" stroke="#000" stroke-width="0.7" />
<polygon points="330,398.9 342.2,398.9 342.2,413.9 324.4,413.9 324.4,409.3 330,405.3" fill="url(#sepg)" stroke="#000" stroke-width="0.9" />
<rect x="324.4" y="413.9" width="17.8" height="37.8" fill="url(#sepg)" stroke="#000" stroke-width="1" />
<path d="M342.5,400.3 L345,401.3 Q352,406.3 352.5,411.3 V438.3" fill="none" stroke="#000" stroke-width="4.6"/>
<path d="M342.5,400.3 L345,401.3 Q352,406.3 352.5,411.3 V438.3" fill="none" stroke="#e6e5dc" stroke-width="2.8"/>
<rect x="348" y="437.3" width="5" height="8" fill="#eee" stroke="#000" stroke-width="0.8" />
<path d="M349,438.8 L350.5,444.3 L352,438.8" fill="none" stroke="#000" stroke-width="0.7"/>
<rect x="348.5" y="446.8" width="4" height="5" fill="#e6e6e6" stroke="#000" stroke-width="0.8" />
<rect x="310.6" y="413.9" width="8.8" height="11.1" fill="#eee" stroke="#000" stroke-width="1" />
<rect x="313.5" y="416.3" width="3.5" height="5.5" fill="#fff" stroke="#000" stroke-width="0.8" />
<path d="M311,427.3 L314,432.3 L319,427.3" fill="none" stroke="#000" stroke-width="2.2"/>
<path d="M311,427.3 L314,432.3 L319,427.3" fill="none" stroke="#eee" stroke-width="1"/>
<polygon points="313,447.3 318,444.3 318,447.3" fill="#bbb" stroke="#000" stroke-width="0.5" />
<rect x="322.2" y="452.8" width="28.9" height="2.2" fill="#f2f2f2" stroke="#000" stroke-width="0.9" />
<polygon points="324.4,455 342.2,455 337,462.8 330,462.8" fill="url(#sepg)" stroke="#000" stroke-width="0.9" />
<rect x="320.1" y="457.3" width="4.8" height="1.6" fill="#fff" stroke="#000" stroke-width="0.5" />
<rect x="342.3" y="457.3" width="4.8" height="1.6" fill="#fff" stroke="#000" stroke-width="0.5" />
<path d="M333,464.3 H340 L343.3,468.3 V471.3 L340,475.3 H333 L329.6,471.3 V468.3 Z" fill="url(#sepg)" stroke="#000" stroke-width="0.9"/>
<polyline points="337,475 337,502" fill="none" stroke="#ffffff" stroke-width="4" stroke-linejoin="miter" stroke-linecap="butt"/>
<rect x="333" y="502" width="9" height="2.2" fill="#333" stroke="#000" stroke-width="0.6" />
<polygon points="334.4,504 339.9,504 339.9,538.1 328.8,522 334.4,509" fill="#dcdcdc" stroke="#000" stroke-width="0.9" />
<polygon points="343.1,520.1 408,532.6 408,546 343,539" fill="#dedede" stroke="#000" stroke-width="0.9" />
<path d="M367.7,528.4 L379.7,530 L379,541.4 L367,540 Z" fill="#c4c4c4" stroke="#000" stroke-width="0.9"/>
<circle cx="373.3" cy="534.8" r="3.2" fill="#888" stroke="#000" stroke-width="0.7"/>
<line x1="341.5" y1="502" x2="341.5" y2="556.7" stroke="#222" stroke-width="2"/>
<line x1="343" y1="547.4" x2="397" y2="547.4" stroke="#222" stroke-width="1.6"/>
<line x1="397.3" y1="535.4" x2="397.3" y2="556.7" stroke="#222" stroke-width="2"/>
<rect x="338" y="555.3" width="7" height="2.2" fill="#333" stroke="#000" stroke-width="0.6" />
<rect x="394" y="555.3" width="7" height="2.2" fill="#333" stroke="#000" stroke-width="0.6" />
<rect x="401.5" y="538" width="6.5" height="7" fill="#c8c8c8" stroke="#000" stroke-width="0.7" />
<rect x="399" y="544" width="9" height="3" fill="#eee" stroke="#000" stroke-width="0.6" />
<path d="M412.9,531.7 L421.4,514.7 H438.8 V519.7 L436.6,521.7 H438.8 V526.7 L436.6,528.7 V531.7 Z" fill="#fff" stroke="#000" stroke-width="1"/>
<rect x="408.4" y="531.7" width="29.2" height="20.8" fill="#fff" stroke="#000" stroke-width="1" />
<rect x="412.9" y="535.7" width="2.5" height="3.5" fill="#fff" stroke="#000" stroke-width="0.9" />
<rect x="427.4" y="534.2" width="5" height="2" fill="#fff" stroke="#000" stroke-width="0.9" />
<rect x="425.4" y="539.2" width="5" height="2" fill="#fff" stroke="#000" stroke-width="0.9" />
<rect x="408.9" y="542.9" width="25.7" height="10" rx="1.5" fill="url(#panelg)" stroke="#000" stroke-width="1"/>
<circle cx="414.4" cy="545.7" r="1.2" fill="#fff" stroke="#000" stroke-width="0.6"/><circle cx="427.9" cy="545.7" r="1.2" fill="#fff" stroke="#000" stroke-width="0.6"/><circle cx="430.4" cy="548.2" r="1.2" fill="#fff" stroke="#000" stroke-width="0.6"/>
<polygon points="412.96,553 435.96,553 426.26,562 422.66,562" fill="url(#funng)" stroke="#000" stroke-width="1" />
<rect x="422.66" y="562" width="3.6" height="3.5" fill="#d9d0aa" stroke="#000" stroke-width="0.8" />
<path d="M416.65,488.96 H423.54 V490 A13 13 0 1 1 423.8,511.58 Q416.65,506.25 416.65,500.4 Z" fill="url(#fang)" stroke="#111" stroke-width="1"/>
<rect x="415.74" y="487.66" width="8.84" height="1.82" fill="#efe8d2" stroke="#111" stroke-width="0.8" />
<circle cx="431.6" cy="500.4" r="8.84" fill="#ede6cc" stroke="#222" stroke-width="0.9" stroke-dasharray="1.2 0.8"/>
<circle cx="431.6" cy="500.4" r="7.28" fill="none" stroke="#8a8270" stroke-width="1.3"/>
<path d="M433.09,500.86 L437.81,502.32 M432.33,501.78 L434.63,506.15 M431.14,501.89 L429.68,506.61 M430.22,501.13 L425.85,503.43 M430.11,499.94 L425.39,498.48 M430.87,499.02 L428.57,494.65 M432.06,498.91 L433.52,494.19 M432.98,499.67 L437.35,497.37" stroke="#6a6250" stroke-width="1.04"/>
<circle cx="431.6" cy="500.4" r="2.34" fill="#222"/>
<rect x="424.45" y="512.75" width="13" height="1.69" fill="#8a8270" stroke="#111" stroke-width="0.7" />
<polyline points="420,487 420,472" fill="none" stroke="#ddd" stroke-width="1.3" stroke-linejoin="miter" stroke-linecap="butt" stroke-dasharray="1.5 1.5"/>
<polygon points="414.5,471 425.5,471 420,461" fill="url(#arrgu)" stroke="#fff" stroke-width="1"/>
<polyline points="423.5,566 423.5,590 399.3,590 399.3,610" fill="none" stroke="#ffffff" stroke-width="3" stroke-linejoin="miter" stroke-linecap="butt"/>
<path d="M486.42,549.38 H493.42 V550.44 A13.2 13.2 0 1 1 493.68,572.35 Q486.42,566.94 486.42,561 Z" fill="url(#fang)" stroke="#111" stroke-width="1"/>
<rect x="485.5" y="548.06" width="8.98" height="1.85" fill="#efe8d2" stroke="#111" stroke-width="0.8" />
<circle cx="501.6" cy="561" r="8.98" fill="#ede6cc" stroke="#222" stroke-width="0.9" stroke-dasharray="1.2 0.8"/>
<circle cx="501.6" cy="561" r="7.39" fill="none" stroke="#8a8270" stroke-width="1.32"/>
<path d="M503.11,561.47 L507.91,562.95 M502.34,562.4 L504.68,566.84 M501.13,562.51 L499.65,567.31 M500.2,561.74 L495.76,564.08 M500.09,560.53 L495.29,559.05 M500.86,559.6 L498.52,555.16 M502.07,559.49 L503.55,554.69 M503,560.26 L507.44,557.92" stroke="#6a6250" stroke-width="1.06"/>
<circle cx="501.6" cy="561" r="2.38" fill="#222"/>
<rect x="494.34" y="573.54" width="13.2" height="1.72" fill="#8a8270" stroke="#111" stroke-width="0.7" />
<polygon points="484.3,534 495.3,534 489.8,524" fill="url(#arrgu)" stroke="#fff" stroke-width="1"/>
<polyline points="489.8,535 489.8,548" fill="none" stroke="#ddd" stroke-width="1.3" stroke-linejoin="miter" stroke-linecap="butt" stroke-dasharray="1.5 1.5"/>
<path d="M439.4,604 Q441,598 450,585 Q460,572 472,571.7 Q485.5,572 485,590 L470.5,627.5 H462.8 L454.3,597.6 Q448,604 439.4,604 Z" fill="#d8d8d8" stroke="#000" stroke-width="1"/>
<circle cx="468.3" cy="592.4" r="8" fill="none" stroke="#000" stroke-width="1"/>
<polyline points="470,592.4 495,592.4 501,587 501,572" fill="none" stroke="#ddd" stroke-width="1.2" stroke-linejoin="miter" stroke-linecap="butt" stroke-dasharray="1.5 1.5"/>
<rect x="453.31" y="629.85" width="23.38" height="1.72" fill="#000" stroke="none" stroke-width="0" rx="0.86"/>
<rect x="457.62" y="632.13" width="16" height="1.23" fill="#fff" stroke="none" stroke-width="0" rx="0.62"/>
<circle cx="465" cy="640.5" r="8" fill="#dcdcdc" stroke="#000" stroke-width="0.9"/>
<path d="M467.77,640.5 L473,640.5 M466.96,642.46 L470.66,646.16 M465,643.27 L465,648.5 M463.04,642.46 L459.34,646.16 M462.23,640.5 L457,640.5 M463.04,638.54 L459.34,634.84 M465,637.73 L465,632.5 M466.96,638.54 L470.66,634.84" stroke="#000" stroke-width="0.7"/>
<circle cx="465" cy="640.5" r="2.77" fill="#6a6a6a" stroke="#000" stroke-width="0.7"/>
<rect x="455.89" y="648.5" width="16" height="1.23" fill="#fff" stroke="none" stroke-width="0" rx="0.62"/>
<rect x="453.31" y="649.55" width="23.38" height="1.72" fill="#000" stroke="none" stroke-width="0" rx="0.86"/>
<polyline points="465,653 465,668" fill="none" stroke="#ddd" stroke-width="1.2" stroke-linejoin="miter" stroke-linecap="butt" stroke-dasharray="1.5 1.5"/>
<polygon points="459.5,667 470.5,667 465,677" fill="url(#arrg)" stroke="#fff" stroke-width="1"/>
<rect x="431" y="680" width="75" height="15" fill="#fff" stroke="#000" stroke-width="0.8"/>
<text x="468.5" y="692.72" text-anchor="middle" font-family="Liberation Sans" font-size="14.5" fill="#000">Resíduos</text>
<rect x="333.3" y="638.5" width="57.5" height="4" fill="#000" stroke="none" stroke-width="0" />
<line x1="334.5" y1="640.5" x2="390" y2="640.5" stroke="#fff" stroke-width="1.2" stroke-dasharray="16 2.5"/>
<rect x="333.3" y="642.5" width="57.1" height="28.8" fill="url(#destg)" stroke="#000" stroke-width="1"/>
<rect x="390.4" y="642" width="36.6" height="35.5" fill="#4c4c4c" stroke="#000" stroke-width="1" />
<line x1="426" y1="643" x2="426" y2="677" stroke="#bbb" stroke-width="0.8"/>
<rect x="393" y="645.5" width="11.5" height="7.5" fill="#ececec" stroke="#000" stroke-width="0.8" />
<path d="M394.5,647 l1.5,-1 1,1.2 1.2,-1.2 1,1.2 M394.5,651 H403" stroke="#000" stroke-width="0.7" fill="none"/>
<rect x="406.5" y="645.5" width="16.5" height="10.5" fill="#ececec" stroke="#000" stroke-width="0.8" />
<path d="M411,648 H417 M408,654 H421" stroke="#000" stroke-width="0.9" fill="none"/>
<line x1="391" y1="657.5" x2="426" y2="657.5" stroke="#000" stroke-width="1"/>
<rect x="390.8" y="660.4" width="23" height="7.9" fill="url(#cylg)" stroke="#000" stroke-width="0.8" />
<line x1="391" y1="670" x2="426" y2="670" stroke="#000" stroke-width="1"/>
<rect x="334" y="671.3" width="93" height="6.2" fill="#3e3e3e" stroke="#000" stroke-width="0.8" />
<path d="M336,672 l2,5 M383,672 l2,5" stroke="#aaa" stroke-width="1"/>
<rect x="370" y="673.5" width="55" height="1.5" fill="#888" stroke="none" stroke-width="0" />
<rect x="333.3" y="677.5" width="93.7" height="3" fill="#8a8a8a" stroke="#000" stroke-width="1" />
<rect x="378.3" y="617" width="14.2" height="22" fill="#8e8e8e" stroke="#000" stroke-width="1" />
<path d="M371,633.5 h3 v-3 h2.5 v8 h-2.5 v-2.5 h-3 Z" fill="#666" stroke="#000" stroke-width="0.6"/>
<rect x="394.2" y="609.2" width="8.3" height="31.6" fill="url(#diskg)" stroke="#000" stroke-width="1"/>
<rect x="402.5" y="620" width="4" height="7" fill="#ddd" stroke="#000" stroke-width="0.7" />
<rect x="406.7" y="618" width="16.6" height="10" fill="#f0f0f0" stroke="#000" stroke-width="1" />
<rect x="407.5" y="618.5" width="14.5" height="5.5" fill="#000" stroke="none" stroke-width="0" />
<path d="M423.3,618.5 Q429,619 429,623 Q429,627.5 423.3,628 Z" fill="#e6e6e6" stroke="#000" stroke-width="0.9"/>
<rect x="402.5" y="629.6" width="24.5" height="11.6" fill="#4c4c4c" stroke="#000" stroke-width="1" />
<ellipse cx="415" cy="635.3" rx="6.5" ry="4" fill="none" stroke="#000" stroke-width="1"/>
<polyline points="333.3,659.5 325,659.5 325,669" fill="none" stroke="#fff" stroke-width="2.6" stroke-linejoin="miter" stroke-linecap="butt"/>
<rect x="321" y="669" width="7.5" height="11" fill="#ddd" stroke="#000" stroke-width="1" rx="1"/>
<polyline points="444.5,606 444.5,645 439,651.5 414,651.5" fill="none" stroke="#ddd" stroke-width="1.2" stroke-linejoin="miter" stroke-linecap="butt" stroke-dasharray="1.5 1.5"/>
<polyline points="358,681 358,691" fill="none" stroke="#ffffff" stroke-width="3" stroke-linejoin="miter" stroke-linecap="butt"/>
<polygon points="352.5,690 363.5,690 358,700" fill="url(#arrg)" stroke="#fff" stroke-width="1"/>
<rect x="316" y="701.7" width="75.7" height="15.6" fill="#fff" stroke="#000" stroke-width="0.8"/>
<text x="353.85" y="714.72" text-anchor="middle" font-family="Liberation Sans" font-size="14.5" fill="#000">Resíduos</text>
<polyline points="418,681 418,718 458.5,718 458.5,738" fill="none" stroke="#ffffff" stroke-width="3" stroke-linejoin="miter" stroke-linecap="butt"/>
<polyline points="424,681 424,705 511.7,705 511.7,866" fill="none" stroke="#ffffff" stroke-width="3" stroke-linejoin="miter" stroke-linecap="butt"/>
<polygon points="506.2,865 517.2,865 511.7,875" fill="url(#arrg)" stroke="#fff" stroke-width="1"/>
<polyline points="451.7,833 451.7,853.3 511.7,853.3" fill="none" stroke="#ffffff" stroke-width="3" stroke-linejoin="miter" stroke-linecap="butt"/>
<rect x="359" y="738" width="103" height="95" fill="#fff" stroke="#333" stroke-width="1" />
<rect x="361.5" y="742" width="98" height="26" fill="url(#dotpat)" stroke="#000" stroke-width="1"/>
<rect x="361.5" y="772" width="98" height="26" fill="url(#dotpat)" stroke="#000" stroke-width="1"/>
<rect x="361.5" y="802" width="98" height="26" fill="url(#dotpat)" stroke="#000" stroke-width="1"/>
<rect x="350" y="734.3" width="9.3" height="109" fill="#16c8d0" stroke="#111" stroke-width="0.8" />
<rect x="461.7" y="734.3" width="8.3" height="109" fill="#16c8d0" stroke="#111" stroke-width="0.8" />
<rect x="324.3" y="744.5" width="24" height="18.5" fill="url(#motg)" stroke="#000" stroke-width="1" rx="3"/>
<rect x="331.8" y="745" width="7" height="8" fill="#e0e0e0" stroke="#000" stroke-width="0.9" />
<rect x="348.3" y="749.5" width="2" height="9" fill="#ccc" stroke="#000" stroke-width="0.6" />
<path d="M329.8,755 H344.8 M329.8,758.5 H344.8" stroke="#555" stroke-width="1.2"/>
<rect x="324.3" y="807.5" width="24" height="18.5" fill="url(#motg)" stroke="#000" stroke-width="1" rx="3"/>
<rect x="331.8" y="808" width="7" height="8" fill="#e0e0e0" stroke="#000" stroke-width="0.9" />
<rect x="348.3" y="812.5" width="2" height="9" fill="#ccc" stroke="#000" stroke-width="0.6" />
<path d="M329.8,818 H344.8 M329.8,821.5 H344.8" stroke="#555" stroke-width="1.2"/>
<rect x="471.5" y="775" width="24" height="18.5" fill="url(#motg)" stroke="#000" stroke-width="1" rx="3"/>
<rect x="481" y="775.5" width="7" height="8" fill="#e0e0e0" stroke="#000" stroke-width="0.9" />
<rect x="469.5" y="780" width="2" height="9" fill="#ccc" stroke="#000" stroke-width="0.6" />
<path d="M475,785.5 H490 M475,789 H490" stroke="#555" stroke-width="1.2"/>
<rect x="471.5" y="807.5" width="24" height="18.5" fill="url(#motg)" stroke="#000" stroke-width="1" rx="3"/>
<rect x="481" y="808" width="7" height="8" fill="#e0e0e0" stroke="#000" stroke-width="0.9" />
<rect x="469.5" y="812.5" width="2" height="9" fill="#ccc" stroke="#000" stroke-width="0.6" />
<path d="M475,818 H490 M475,821.5 H490" stroke="#555" stroke-width="1.2"/>
<polyline points="406,833 406,860" fill="none" stroke="#ffffff" stroke-width="3" stroke-linejoin="miter" stroke-linecap="butt"/>
<polygon points="400.5,859 411.5,859 406,869" fill="url(#arrg)" stroke="#fff" stroke-width="1"/>
<rect x="369.5" y="871.7" width="75.8" height="15.6" fill="#fff" stroke="#000" stroke-width="0.8"/>
<text x="407.4" y="884.72" text-anchor="middle" font-family="Liberation Sans" font-size="14.5" fill="#000">Resíduos</text>
<polyline points="566.9,148 566.9,234.3 614.4,234.3 614.4,327" fill="none" stroke="#ffffff" stroke-width="3" stroke-linejoin="miter" stroke-linecap="butt"/>
<polyline points="586,390.6 586,341 642.5,341 642.5,427.6" fill="none" stroke="#ffffff" stroke-width="3" stroke-linejoin="miter" stroke-linecap="butt"/>
<polygon points="580.5,389.6 591.5,389.6 586,399.6" fill="url(#arrg)" stroke="#fff" stroke-width="1"/>
<polygon points="637,426.6 648,426.6 642.5,436.6" fill="url(#arrg)" stroke="#fff" stroke-width="1"/>
<circle cx="614.4" cy="335.3" r="8" fill="#474747" stroke="#fff" stroke-width="1.1"/>
<line x1="614.4" y1="327.3" x2="620.4" y2="340.5" stroke="#fff" stroke-width="3"/>
<rect x="573" y="404.5" width="8" height="43" fill="#d8d8d8" stroke="#222" stroke-width="1" />
<rect x="581" y="400.5" width="54" height="26" fill="#d6d6d6" stroke="#222" stroke-width="1" />
<rect x="588" y="405.5" width="40" height="15" fill="#dcdcdc" stroke="#222" stroke-width="1" />
<line x1="597" y1="408.5" x2="597" y2="415.5" stroke="#222" stroke-width="1.5"/>
<line x1="619" y1="408.5" x2="619" y2="415.5" stroke="#222" stroke-width="1.5"/>
<path d="M581,426.5 H635 V448.5 H629 V436.5 H587 V448.5 H581 Z" fill="#12c4cc" stroke="#111" stroke-width="0.8"/>
<polygon points="601,436.5 615,436.5 609,442.5 607,442.5" fill="#d8cfa8" stroke="#333" stroke-width="0.6" />
<rect x="588" y="439.5" width="8" height="8" fill="#f4f4f4" stroke="#555" stroke-width="0.6" />
<polyline points="607,448 607,456" fill="none" stroke="#ddd" stroke-width="1.2" stroke-linejoin="miter" stroke-linecap="butt" stroke-dasharray="1.5 1.5"/>
<polygon points="601.5,455 612.5,455 607,465" fill="url(#arrg)" stroke="#fff" stroke-width="1"/>
<path d="M639,438 V444 H646 M642.5,436 V446" stroke="#111" stroke-width="1.2" fill="none"/>
<rect x="637" y="445" width="10" height="2.5" fill="#eee" stroke="#000" stroke-width="0.6" />
<path d="M653,427.1 L661.5,410.1 H680.4 V415.1 L678.2,417.1 H680.4 V422.1 L678.2,424.1 V427.1 Z" fill="#fff" stroke="#000" stroke-width="1"/>
<rect x="648.5" y="427.1" width="30.7" height="21.6" fill="#fff" stroke="#000" stroke-width="1" />
<rect x="653" y="431.1" width="2.5" height="3.5" fill="#fff" stroke="#000" stroke-width="0.9" />
<rect x="667.5" y="429.6" width="5" height="2" fill="#fff" stroke="#000" stroke-width="0.9" />
<rect x="665.5" y="434.6" width="5" height="2" fill="#fff" stroke="#000" stroke-width="0.9" />
<rect x="649" y="438.3" width="27.2" height="10.8" rx="1.5" fill="url(#panelg)" stroke="#000" stroke-width="1"/>
<circle cx="654.5" cy="441.1" r="1.2" fill="#fff" stroke="#000" stroke-width="0.6"/><circle cx="668" cy="441.1" r="1.2" fill="#fff" stroke="#000" stroke-width="0.6"/><circle cx="670.5" cy="443.6" r="1.2" fill="#fff" stroke="#000" stroke-width="0.6"/>
<polygon points="653.88,449.2 676.88,449.2 667.18,458.2 663.59,458.2" fill="url(#funng)" stroke="#000" stroke-width="1" />
<rect x="663.59" y="458.2" width="3.6" height="3.5" fill="#d9d0aa" stroke="#000" stroke-width="0.8" />
<path d="M661.6,384.44 H667.96 V385.4 A12 12 0 1 1 668.2,405.32 Q661.6,400.4 661.6,395 Z" fill="url(#fang)" stroke="#111" stroke-width="1"/>
<rect x="660.76" y="383.24" width="8.16" height="1.68" fill="#efe8d2" stroke="#111" stroke-width="0.8" />
<circle cx="675.4" cy="395" r="8.16" fill="#ede6cc" stroke="#222" stroke-width="0.9" stroke-dasharray="1.2 0.8"/>
<circle cx="675.4" cy="395" r="6.72" fill="none" stroke="#8a8270" stroke-width="1.2"/>
<path d="M676.78,395.43 L681.13,396.77 M676.07,396.27 L678.2,400.31 M674.97,396.38 L673.63,400.73 M674.13,395.67 L670.09,397.8 M674.02,394.57 L669.67,393.23 M674.73,393.73 L672.6,389.69 M675.83,393.62 L677.17,389.27 M676.67,394.33 L680.71,392.2" stroke="#6a6250" stroke-width="0.96"/>
<circle cx="675.4" cy="395" r="2.16" fill="#222"/>
<rect x="668.8" y="406.4" width="12" height="1.56" fill="#8a8270" stroke="#111" stroke-width="0.7" />
<polyline points="662.8,383 662.8,368" fill="none" stroke="#ddd" stroke-width="1.2" stroke-linejoin="miter" stroke-linecap="butt" stroke-dasharray="1.5 1.5"/>
<polygon points="657.3,367 668.3,367 662.8,357" fill="url(#arrgu)" stroke="#fff" stroke-width="1"/>
<polyline points="665.4,461 665.4,520" fill="none" stroke="#ffffff" stroke-width="3" stroke-linejoin="miter" stroke-linecap="butt"/>
<polygon points="659.9,519 670.9,519 665.4,529" fill="url(#arrg)" stroke="#fff" stroke-width="1"/>
<rect x="644.4" y="530.2" width="36.2" height="54.8" fill="#6e6e6e" stroke="#000" stroke-width="1.2" />
<line x1="646" y1="531.6" x2="679" y2="531.6" stroke="#bbb" stroke-width="1.2" stroke-dasharray="1.5 1.5"/>
<line x1="645" y1="533" x2="680" y2="533" stroke="#1515ff" stroke-width="1.1"/>
<rect x="647.2" y="536.4" width="30.6" height="47.2" fill="none" stroke="#1515ff" stroke-width="1.1" />
<path d="M653.7,536.4 V583.6 M656.1,536.4 V583.6 M668.9,536.4 V583.6 M671.7,536.4 V583.6" stroke="#1515ff" stroke-width="1"/>
<rect x="656.5" y="538.3" width="12" height="5.6" fill="#6e6e6e" stroke="#1515ff" stroke-width="1" />
<rect x="656.5" y="546.3" width="12" height="5.9" fill="#6e6e6e" stroke="#1515ff" stroke-width="1" />
<rect x="658" y="547.8" width="9" height="2.2" fill="#fff" stroke="none" stroke-width="0" />
<rect x="656.5" y="554.4" width="12" height="4" fill="none" stroke="#1515ff" stroke-width="1" />
<rect x="655.6" y="559.4" width="15" height="12.8" fill="url(#grayg)" stroke="#000" stroke-width="1.8" rx="1.5"/>
<path d="M645,585 L653,587 L647,593 Z M680,585 L672,587 L678,593 Z" fill="#888"/>
<polygon points="650,587 676,587 667,602 659,602" fill="#5a5a5a" stroke="#000" stroke-width="1" />
<path d="M645.7,585 V625.6 M679.3,585 V625.6" stroke="#000" stroke-width="2.6"/>
<path d="M645,604.4 H680" stroke="#000" stroke-width="2"/>
<path d="M649,588 V623 M676,588 V623" stroke="#000" stroke-width="0.8"/>
<polyline points="662.8,605 662.8,729.5 701.3,729.5 701.3,865" fill="none" stroke="#ffffff" stroke-width="3" stroke-linejoin="miter" stroke-linecap="butt"/>
<polygon points="695.8,864 706.8,864 701.3,874" fill="url(#arrg)" stroke="#fff" stroke-width="1"/>
<polyline points="753.3,148 753.3,173.3 798.3,173.3 798.3,181" fill="none" stroke="#ffffff" stroke-width="3" stroke-linejoin="miter" stroke-linecap="butt"/>
<polygon points="792.8,180 803.8,180 798.3,190" fill="url(#arrg)" stroke="#fff" stroke-width="1"/>
<path d="M784.3,254.5 V207.3 L792.1,195.3 V192.5 H814.4 L824.5,213.8 V254.5" fill="#aba588" stroke="#fff" stroke-width="1.2"/>
<path d="M785.3,254 V207.6 L792.8,196 M805,193.4 H814 L823.6,214 V254" fill="none" stroke="#000" stroke-width="0.9"/>
<rect x="792.1" y="190.2" width="12.5" height="5.1" fill="#aba588" stroke="#000" stroke-width="1" />
<line x1="785" y1="214.7" x2="824" y2="214.7" stroke="#000" stroke-width="1"/>
<polygon points="787,213.8 810.5,213.8 798.9,199" fill="#aba588" stroke="#000" stroke-width="0.9" />
<circle cx="798.9" cy="203.6" r="9.3" fill="#d9d9d9" stroke="#000" stroke-width="1"/>
<rect x="796.8" y="214.7" width="5.1" height="4.8" fill="#eee" stroke="#000" stroke-width="0.8" />
<polygon points="788.9,222.1 817.1,222.1 819,226.8 806.5,245.3 800,245.3" fill="#fff" stroke="#000" stroke-width="1" />
<path d="M806,228 L815,222.6 M800,236 L809,230.5 M804,224 L810,232 M797,232 L803,240" stroke="#000" stroke-width="0.8"/>
<circle cx="809" cy="227.5" r="2.2" fill="#fff" stroke="#000" stroke-width="0.8"/><circle cx="802" cy="235" r="2.2" fill="#fff" stroke="#000" stroke-width="0.8"/>
<polygon points="817.5,225.5 831.9,236.5 829.6,239.8 815.5,230" fill="#aba588" stroke="#000" stroke-width="0.9" />
<path d="M784.3,254.5 H824.5 V273.5 H819.4 V260.6 H789.5 V273.5 H784.3 Z" fill="#12c8d0" stroke="#000" stroke-width="0.9"/>
<polyline points="830.5,238.3 852.7,238.3 852.7,276" fill="none" stroke="#ffffff" stroke-width="3" stroke-linejoin="miter" stroke-linecap="butt"/>
<polyline points="826.7,309 826.7,288.3 883.3,288.3 883.3,304.3" fill="none" stroke="#ffffff" stroke-width="3" stroke-linejoin="miter" stroke-linecap="butt"/>
<polygon points="877.8,303.3 888.8,303.3 883.3,313.3" fill="url(#arrg)" stroke="#fff" stroke-width="1"/>
<circle cx="852.7" cy="283.3" r="8" fill="#474747" stroke="#fff" stroke-width="1.1"/>
<line x1="852.7" y1="275.3" x2="858.7" y2="288.5" stroke="#fff" stroke-width="3"/>
<polyline points="812.3,349 812.3,320 846.7,320 846.7,353.3 886.7,353.3 886.7,402.7" fill="none" stroke="#ffffff" stroke-width="3" stroke-linejoin="miter" stroke-linecap="butt"/>
<polygon points="881.2,402 892.2,402 886.7,412" fill="url(#arrg)" stroke="#fff" stroke-width="1"/>
<circle cx="826.7" cy="316.7" r="8" fill="#474747" stroke="#fff" stroke-width="1.1"/>
<line x1="826.7" y1="308.7" x2="820.7" y2="321.9" stroke="#fff" stroke-width="3"/>
<polyline points="788.3,402.7 788.3,362.3 836.7,362.3 836.7,402.7" fill="none" stroke="#ffffff" stroke-width="3" stroke-linejoin="miter" stroke-linecap="butt"/>
<polygon points="782.8,402 793.8,402 788.3,412" fill="url(#arrg)" stroke="#fff" stroke-width="1"/>
<polygon points="831.2,402 842.2,402 836.7,412" fill="url(#arrg)" stroke="#fff" stroke-width="1"/>
<circle cx="812.3" cy="356.7" r="8" fill="#474747" stroke="#fff" stroke-width="1.1"/>
<line x1="812.3" y1="348.7" x2="806.3" y2="361.9" stroke="#fff" stroke-width="3"/>
<rect x="876" y="316.7" width="377.3" height="15.5" fill="#bdbdbd" stroke="#fff" stroke-width="1.2"/>
<rect x="877.5" y="318.2" width="374.3" height="12.5" fill="none" stroke="#555" stroke-width="0.8"/>
<rect x="879" y="319.7" width="371.3" height="9.5" fill="none" stroke="#f4f4f4" stroke-width="0.8" stroke-dasharray="1 1.2"/>
<circle cx="892" cy="324.45" r="6.3" fill="#e4e4e4" stroke="#000" stroke-width="1.1"/>
<path d="M887.7,320.15 L896.3,328.75 M887.7,328.75 L896.3,320.15" stroke="#000" stroke-width="1"/>
<circle cx="1240" cy="324.45" r="6.3" fill="#e4e4e4" stroke="#000" stroke-width="1.1"/>
<path d="M1235.7,320.15 L1244.3,328.75 M1235.7,328.75 L1244.3,320.15" stroke="#000" stroke-width="1"/>
<polyline points="1234.3,316.7 1253.3,303.7 1253.3,316.7" fill="none" stroke="#eee" stroke-width="1"/>
<circle cx="862.7" cy="322.7" r="6" fill="#999" stroke="#e6e6e6" stroke-width="1"/>
<polyline points="971.6,332 971.6,356" fill="none" stroke="#ffffff" stroke-width="3" stroke-linejoin="miter" stroke-linecap="butt"/>
<rect x="961.6" y="339.4" width="20" height="6" fill="#888" stroke="#000" stroke-width="1.2" />
<polyline points="939.4,403 939.4,366.8 1012.5,366.8 1012.5,380" fill="none" stroke="#ffffff" stroke-width="3" stroke-linejoin="miter" stroke-linecap="butt"/>
<polygon points="933.9,402.6 944.9,402.6 939.4,412.6" fill="url(#arrg)" stroke="#fff" stroke-width="1"/>
<circle cx="971.6" cy="361.7" r="8" fill="#474747" stroke="#fff" stroke-width="1.1"/>
<line x1="971.6" y1="353.7" x2="965.6" y2="366.9" stroke="#fff" stroke-width="3"/>
<polyline points="988.9,403 988.9,390 1040.5,390 1040.5,403" fill="none" stroke="#ffffff" stroke-width="3" stroke-linejoin="miter" stroke-linecap="butt"/>
<polygon points="983.4,402.6 994.4,402.6 988.9,412.6" fill="url(#arrg)" stroke="#fff" stroke-width="1"/>
<polygon points="1035,402.6 1046,402.6 1040.5,412.6" fill="url(#arrg)" stroke="#fff" stroke-width="1"/>
<circle cx="1012.5" cy="386.7" r="8" fill="#474747" stroke="#fff" stroke-width="1.1"/>
<line x1="1012.5" y1="378.7" x2="1018.5" y2="391.9" stroke="#fff" stroke-width="3"/>
<polyline points="1086.2,332 1086.2,403" fill="none" stroke="#ffffff" stroke-width="3" stroke-linejoin="miter" stroke-linecap="butt"/>
<polygon points="1080.7,402.6 1091.7,402.6 1086.2,412.6" fill="url(#arrg)" stroke="#fff" stroke-width="1"/>
<rect x="1075.6" y="339.3" width="18.8" height="5.8" fill="#00e000" stroke="#111" stroke-width="1" />
<line x1="1065.6" y1="342.2" x2="1075.6" y2="342.2" stroke="#00e000" stroke-width="1.5"/>
<polyline points="1160,332 1160,362" fill="none" stroke="#ffffff" stroke-width="3" stroke-linejoin="miter" stroke-linecap="butt"/>
<rect x="1150" y="339.2" width="20" height="6" fill="#888" stroke="#000" stroke-width="1.2" />
<polyline points="1137.3,403 1137.3,372.7 1185.6,372.7 1185.6,403" fill="none" stroke="#ffffff" stroke-width="3" stroke-linejoin="miter" stroke-linecap="butt"/>
<polygon points="1131.8,402.6 1142.8,402.6 1137.3,412.6" fill="url(#arrg)" stroke="#fff" stroke-width="1"/>
<polygon points="1180.1,402.6 1191.1,402.6 1185.6,412.6" fill="url(#arrg)" stroke="#fff" stroke-width="1"/>
<circle cx="1160" cy="367.8" r="8" fill="#474747" stroke="#fff" stroke-width="1.1"/>
<line x1="1160" y1="359.8" x2="1154" y2="373" stroke="#fff" stroke-width="3"/>
<polyline points="1235.6,332 1235.6,403" fill="none" stroke="#ffffff" stroke-width="3" stroke-linejoin="miter" stroke-linecap="butt"/>
<polygon points="1230.1,402.6 1241.1,402.6 1235.6,412.6" fill="url(#arrg)" stroke="#fff" stroke-width="1"/>
<rect x="762.4" y="413.3" width="49.9" height="176" fill="url(#khak)" stroke="none" stroke-width="0" />
<polygon points="762.4,589.3 812.3,589.3 800.9,633 773.9,633" fill="url(#khakc)" stroke="none" stroke-width="0" />
<path d="M762.4,589.3 V413.3 H812.3 V589.3" fill="none" stroke="#000" stroke-width="1.6"/>
<path d="M762.4,589.3 L773.9,633 M812.3,589.3 L800.9,633" fill="none" stroke="#000" stroke-width="1"/>
<rect x="774.9" y="637.5" width="25" height="9" fill="url(#khak)" stroke="#111" stroke-width="1" rx="1.5"/>
<rect x="776.4" y="634.5" width="25" height="3.8" fill="#e8e8e8" stroke="#222" stroke-width="0.8" />
<polygon points="772.4,629 776.4,634.5 776.4,638.3 772.4,638.3" fill="#e8e8e8" stroke="#222" stroke-width="0.6" />
<rect x="756.9" y="625" width="14" height="16" fill="#e0e0e0" stroke="#000" stroke-width="1.8" rx="2"/>
<rect x="760.4" y="627.5" width="7" height="3" fill="#fff" stroke="#000" stroke-width="0.9" />
<rect x="760.4" y="635.5" width="7" height="3" fill="#fff" stroke="#000" stroke-width="0.9" />
<rect x="770.9" y="631.5" width="2" height="3" fill="#fff" stroke="#000" stroke-width="0.6" />
<circle cx="787.35" cy="425.3" r="6.8" fill="#000" stroke="#fff" stroke-width="1.2"/>
<rect x="771" y="470.2" width="35.3" height="18.5" fill="#00e4e4" stroke="none" stroke-width="0" />
<path d="M771,488.7 V470.2 H806.3" fill="none" stroke="#000" stroke-width="1.3"/>
<path d="M771,488.7 H806.3 V470.2" fill="none" stroke="#fff" stroke-width="1.3"/>
<text x="787.35" y="484.5" text-anchor="middle" font-size="14" fill="#003048">0</text>
<circle cx="787.35" cy="520" r="13" fill="#3e3a30" fill-opacity="0.78"/>
<text x="787.35" y="526" text-anchor="middle" font-family="Liberation Serif" font-weight="bold" font-size="17" fill="#fff">1</text>
<rect x="812.3" y="413.3" width="49.9" height="176" fill="url(#khak)" stroke="none" stroke-width="0" />
<polygon points="812.3,589.3 862.2,589.3 850.8,633 823.8,633" fill="url(#khakc)" stroke="none" stroke-width="0" />
<path d="M812.3,589.3 V413.3 H862.2 V589.3" fill="none" stroke="#000" stroke-width="1.6"/>
<path d="M812.3,589.3 L823.8,633 M862.2,589.3 L850.8,633" fill="none" stroke="#000" stroke-width="1"/>
<rect x="824.8" y="637.5" width="25" height="9" fill="url(#khak)" stroke="#111" stroke-width="1" rx="1.5"/>
<rect x="826.3" y="634.5" width="25" height="3.8" fill="#e8e8e8" stroke="#222" stroke-width="0.8" />
<polygon points="822.3,629 826.3,634.5 826.3,638.3 822.3,638.3" fill="#e8e8e8" stroke="#222" stroke-width="0.6" />
<rect x="806.8" y="625" width="14" height="16" fill="#e0e0e0" stroke="#000" stroke-width="1.8" rx="2"/>
<rect x="810.3" y="627.5" width="7" height="3" fill="#fff" stroke="#000" stroke-width="0.9" />
<rect x="810.3" y="635.5" width="7" height="3" fill="#fff" stroke="#000" stroke-width="0.9" />
<rect x="820.8" y="631.5" width="2" height="3" fill="#fff" stroke="#000" stroke-width="0.6" />
<circle cx="837.25" cy="425.3" r="6.8" fill="#000" stroke="#fff" stroke-width="1.2"/>
<rect x="820.9" y="470.2" width="35.3" height="18.5" fill="#00e4e4" stroke="none" stroke-width="0" />
<path d="M820.9,488.7 V470.2 H856.2" fill="none" stroke="#000" stroke-width="1.3"/>
<path d="M820.9,488.7 H856.2 V470.2" fill="none" stroke="#fff" stroke-width="1.3"/>
<text x="837.25" y="484.5" text-anchor="middle" font-size="14" fill="#003048">0</text>
<circle cx="837.25" cy="520" r="13" fill="#3e3a30" fill-opacity="0.78"/>
<text x="837.25" y="526" text-anchor="middle" font-family="Liberation Serif" font-weight="bold" font-size="17" fill="#fff">3</text>
<rect x="862.2" y="413.3" width="49.9" height="176" fill="url(#khak)" stroke="none" stroke-width="0" />
<polygon points="862.2,589.3 912.1,589.3 900.7,633 873.7,633" fill="url(#khakc)" stroke="none" stroke-width="0" />
<path d="M862.2,589.3 V413.3 H912.1 V589.3" fill="none" stroke="#000" stroke-width="1.6"/>
<path d="M862.2,589.3 L873.7,633 M912.1,589.3 L900.7,633" fill="none" stroke="#000" stroke-width="1"/>
<rect x="874.7" y="637.5" width="25" height="9" fill="url(#khak)" stroke="#111" stroke-width="1" rx="1.5"/>
<rect x="876.2" y="634.5" width="25" height="3.8" fill="#e8e8e8" stroke="#222" stroke-width="0.8" />
<polygon points="872.2,629 876.2,634.5 876.2,638.3 872.2,638.3" fill="#e8e8e8" stroke="#222" stroke-width="0.6" />
<rect x="856.7" y="625" width="14" height="16" fill="#e0e0e0" stroke="#000" stroke-width="1.8" rx="2"/>
<rect x="860.2" y="627.5" width="7" height="3" fill="#fff" stroke="#000" stroke-width="0.9" />
<rect x="860.2" y="635.5" width="7" height="3" fill="#fff" stroke="#000" stroke-width="0.9" />
<rect x="870.7" y="631.5" width="2" height="3" fill="#fff" stroke="#000" stroke-width="0.6" />
<circle cx="887.15" cy="425.3" r="6.8" fill="#000" stroke="#fff" stroke-width="1.2"/>
<rect x="870.8" y="470.2" width="35.3" height="18.5" fill="#00e4e4" stroke="none" stroke-width="0" />
<path d="M870.8,488.7 V470.2 H906.1" fill="none" stroke="#000" stroke-width="1.3"/>
<path d="M870.8,488.7 H906.1 V470.2" fill="none" stroke="#fff" stroke-width="1.3"/>
<text x="887.15" y="484.5" text-anchor="middle" font-size="14" fill="#003048">0</text>
<circle cx="887.15" cy="520" r="13" fill="#3e3a30" fill-opacity="0.78"/>
<text x="887.15" y="526" text-anchor="middle" font-family="Liberation Serif" font-weight="bold" font-size="17" fill="#fff">5</text>
<rect x="912.1" y="413.3" width="49.9" height="176" fill="url(#khak)" stroke="none" stroke-width="0" />
<polygon points="912.1,589.3 962,589.3 950.6,633 923.6,633" fill="url(#khakc)" stroke="none" stroke-width="0" />
<path d="M912.1,589.3 V413.3 H962 V589.3" fill="none" stroke="#000" stroke-width="1.6"/>
<path d="M912.1,589.3 L923.6,633 M962,589.3 L950.6,633" fill="none" stroke="#000" stroke-width="1"/>
<rect x="924.6" y="637.5" width="25" height="9" fill="url(#khak)" stroke="#111" stroke-width="1" rx="1.5"/>
<rect x="926.1" y="634.5" width="25" height="3.8" fill="#e8e8e8" stroke="#222" stroke-width="0.8" />
<polygon points="922.1,629 926.1,634.5 926.1,638.3 922.1,638.3" fill="#e8e8e8" stroke="#222" stroke-width="0.6" />
<rect x="906.6" y="625" width="14" height="16" fill="#e0e0e0" stroke="#000" stroke-width="1.8" rx="2"/>
<rect x="910.1" y="627.5" width="7" height="3" fill="#fff" stroke="#000" stroke-width="0.9" />
<rect x="910.1" y="635.5" width="7" height="3" fill="#fff" stroke="#000" stroke-width="0.9" />
<rect x="920.6" y="631.5" width="2" height="3" fill="#fff" stroke="#000" stroke-width="0.6" />
<circle cx="937.05" cy="425.3" r="6.8" fill="#000" stroke="#fff" stroke-width="1.2"/>
<rect x="920.7" y="470.2" width="35.3" height="18.5" fill="#00e4e4" stroke="none" stroke-width="0" />
<path d="M920.7,488.7 V470.2 H956" fill="none" stroke="#000" stroke-width="1.3"/>
<path d="M920.7,488.7 H956 V470.2" fill="none" stroke="#fff" stroke-width="1.3"/>
<text x="937.05" y="484.5" text-anchor="middle" font-size="14" fill="#003048">0</text>
<circle cx="937.05" cy="520" r="13" fill="#3e3a30" fill-opacity="0.78"/>
<text x="937.05" y="526" text-anchor="middle" font-family="Liberation Serif" font-weight="bold" font-size="17" fill="#fff">2</text>
<rect x="962" y="413.3" width="49.9" height="176" fill="url(#khak)" stroke="none" stroke-width="0" />
<polygon points="962,589.3 1011.9,589.3 1000.5,633 973.5,633" fill="url(#khakc)" stroke="none" stroke-width="0" />
<path d="M962,589.3 V413.3 H1011.9 V589.3" fill="none" stroke="#000" stroke-width="1.6"/>
<path d="M962,589.3 L973.5,633 M1011.9,589.3 L1000.5,633" fill="none" stroke="#000" stroke-width="1"/>
<rect x="974.5" y="637.5" width="25" height="9" fill="url(#khak)" stroke="#111" stroke-width="1" rx="1.5"/>
<rect x="976" y="634.5" width="25" height="3.8" fill="#e8e8e8" stroke="#222" stroke-width="0.8" />
<polygon points="972,629 976,634.5 976,638.3 972,638.3" fill="#e8e8e8" stroke="#222" stroke-width="0.6" />
<rect x="956.5" y="625" width="14" height="16" fill="#e0e0e0" stroke="#000" stroke-width="1.8" rx="2"/>
<rect x="960" y="627.5" width="7" height="3" fill="#fff" stroke="#000" stroke-width="0.9" />
<rect x="960" y="635.5" width="7" height="3" fill="#fff" stroke="#000" stroke-width="0.9" />
<rect x="970.5" y="631.5" width="2" height="3" fill="#fff" stroke="#000" stroke-width="0.6" />
<circle cx="986.95" cy="425.3" r="6.8" fill="#f00" stroke="#fff" stroke-width="1.2"/>
<rect x="970.6" y="470.2" width="35.3" height="18.5" fill="#00e4e4" stroke="none" stroke-width="0" />
<path d="M970.6,488.7 V470.2 H1005.9" fill="none" stroke="#000" stroke-width="1.3"/>
<path d="M970.6,488.7 H1005.9 V470.2" fill="none" stroke="#fff" stroke-width="1.3"/>
<text x="986.95" y="484.5" text-anchor="middle" font-size="14" fill="#003048">0</text>
<circle cx="986.95" cy="520" r="13" fill="#3e3a30" fill-opacity="0.78"/>
<text x="986.95" y="526" text-anchor="middle" font-family="Liberation Serif" font-weight="bold" font-size="17" fill="#fff">4</text>
<rect x="1011.9" y="413.3" width="49.9" height="176" fill="url(#khak)" stroke="none" stroke-width="0" />
<polygon points="1011.9,589.3 1061.8,589.3 1050.4,633 1023.4,633" fill="url(#khakc)" stroke="none" stroke-width="0" />
<path d="M1011.9,589.3 V413.3 H1061.8 V589.3" fill="none" stroke="#000" stroke-width="1.6"/>
<path d="M1011.9,589.3 L1023.4,633 M1061.8,589.3 L1050.4,633" fill="none" stroke="#000" stroke-width="1"/>
<rect x="1024.4" y="637.5" width="25" height="9" fill="url(#khak)" stroke="#111" stroke-width="1" rx="1.5"/>
<rect x="1025.9" y="634.5" width="25" height="3.8" fill="#e8e8e8" stroke="#222" stroke-width="0.8" />
<polygon points="1021.9,629 1025.9,634.5 1025.9,638.3 1021.9,638.3" fill="#e8e8e8" stroke="#222" stroke-width="0.6" />
<rect x="1006.4" y="625" width="14" height="16" fill="#e0e0e0" stroke="#000" stroke-width="1.8" rx="2"/>
<rect x="1009.9" y="627.5" width="7" height="3" fill="#fff" stroke="#000" stroke-width="0.9" />
<rect x="1009.9" y="635.5" width="7" height="3" fill="#fff" stroke="#000" stroke-width="0.9" />
<rect x="1020.4" y="631.5" width="2" height="3" fill="#fff" stroke="#000" stroke-width="0.6" />
<circle cx="1036.85" cy="425.3" r="6.8" fill="#000" stroke="#fff" stroke-width="1.2"/>
<rect x="1020.5" y="470.2" width="35.3" height="18.5" fill="#00e4e4" stroke="none" stroke-width="0" />
<path d="M1020.5,488.7 V470.2 H1055.8" fill="none" stroke="#000" stroke-width="1.3"/>
<path d="M1020.5,488.7 H1055.8 V470.2" fill="none" stroke="#fff" stroke-width="1.3"/>
<text x="1036.85" y="484.5" text-anchor="middle" font-size="14" fill="#003048">0</text>
<circle cx="1036.85" cy="520" r="13" fill="#3e3a30" fill-opacity="0.78"/>
<text x="1036.85" y="526" text-anchor="middle" font-family="Liberation Serif" font-weight="bold" font-size="17" fill="#fff">6</text>
<rect x="1061.8" y="413.3" width="49.9" height="176" fill="url(#khak)" stroke="none" stroke-width="0" />
<polygon points="1061.8,589.3 1111.7,589.3 1100.3,633 1073.3,633" fill="url(#khakc)" stroke="none" stroke-width="0" />
<path d="M1061.8,589.3 V413.3 H1111.7 V589.3" fill="none" stroke="#000" stroke-width="1.6"/>
<path d="M1061.8,589.3 L1073.3,633 M1111.7,589.3 L1100.3,633" fill="none" stroke="#000" stroke-width="1"/>
<path d="M1073.3,633 H1100.3 V644 Q1100.3,646.5 1097.8,646.5 H1075.8 Q1073.3,646.5 1073.3,644 Z" fill="url(#khak)" stroke="#111" stroke-width="1"/>
<circle cx="1086.75" cy="425.3" r="6.8" fill="#000" stroke="#fff" stroke-width="1.2"/>
<rect x="1070.4" y="470.2" width="35.3" height="18.5" fill="#00e4e4" stroke="none" stroke-width="0" />
<path d="M1070.4,488.7 V470.2 H1105.7" fill="none" stroke="#000" stroke-width="1.3"/>
<path d="M1070.4,488.7 H1105.7 V470.2" fill="none" stroke="#fff" stroke-width="1.3"/>
<text x="1086.75" y="484.5" text-anchor="middle" font-size="14" fill="#003048">1</text>
<circle cx="1086.75" cy="520" r="13" fill="#3e3a30" fill-opacity="0.78"/>
<text x="1086.75" y="526" text-anchor="middle" font-family="Liberation Serif" font-weight="bold" font-size="17" fill="#fff">7</text>
<rect x="1111.7" y="413.3" width="49.9" height="176" fill="url(#khak)" stroke="none" stroke-width="0" />
<polygon points="1111.7,589.3 1161.6,589.3 1150.2,633 1123.2,633" fill="url(#khakc)" stroke="none" stroke-width="0" />
<path d="M1111.7,589.3 V413.3 H1161.6 V589.3" fill="none" stroke="#000" stroke-width="1.6"/>
<path d="M1111.7,589.3 L1123.2,633 M1161.6,589.3 L1150.2,633" fill="none" stroke="#000" stroke-width="1"/>
<path d="M1123.2,633 H1150.2 V644 Q1150.2,646.5 1147.7,646.5 H1125.7 Q1123.2,646.5 1123.2,644 Z" fill="url(#khak)" stroke="#111" stroke-width="1"/>
<circle cx="1136.65" cy="425.3" r="6.8" fill="#000" stroke="#fff" stroke-width="1.2"/>
<rect x="1120.3" y="470.2" width="35.3" height="18.5" fill="#00e4e4" stroke="none" stroke-width="0" />
<path d="M1120.3,488.7 V470.2 H1155.6" fill="none" stroke="#000" stroke-width="1.3"/>
<path d="M1120.3,488.7 H1155.6 V470.2" fill="none" stroke="#fff" stroke-width="1.3"/>
<text x="1136.65" y="484.5" text-anchor="middle" font-size="14" fill="#003048">0</text>
<circle cx="1136.65" cy="520" r="13" fill="#3e3a30" fill-opacity="0.78"/>
<text x="1136.65" y="526" text-anchor="middle" font-family="Liberation Serif" font-weight="bold" font-size="17" fill="#fff">8</text>
<rect x="1161.6" y="413.3" width="49.9" height="176" fill="url(#khak)" stroke="none" stroke-width="0" />
<polygon points="1161.6,589.3 1211.5,589.3 1200.1,633 1173.1,633" fill="url(#khakc)" stroke="none" stroke-width="0" />
<path d="M1161.6,589.3 V413.3 H1211.5 V589.3" fill="none" stroke="#000" stroke-width="1.6"/>
<path d="M1161.6,589.3 L1173.1,633 M1211.5,589.3 L1200.1,633" fill="none" stroke="#000" stroke-width="1"/>
<path d="M1173.1,633 H1200.1 V644 Q1200.1,646.5 1197.6,646.5 H1175.6 Q1173.1,646.5 1173.1,644 Z" fill="url(#khak)" stroke="#111" stroke-width="1"/>
<circle cx="1186.55" cy="425.3" r="6.8" fill="#000" stroke="#fff" stroke-width="1.2"/>
<rect x="1170.2" y="470.2" width="35.3" height="18.5" fill="#00e4e4" stroke="none" stroke-width="0" />
<path d="M1170.2,488.7 V470.2 H1205.5" fill="none" stroke="#000" stroke-width="1.3"/>
<path d="M1170.2,488.7 H1205.5 V470.2" fill="none" stroke="#fff" stroke-width="1.3"/>
<text x="1186.55" y="484.5" text-anchor="middle" font-size="14" fill="#003048">0</text>
<circle cx="1186.55" cy="520" r="13" fill="#3e3a30" fill-opacity="0.78"/>
<text x="1186.55" y="526" text-anchor="middle" font-family="Liberation Serif" font-weight="bold" font-size="17" fill="#fff">9</text>
<rect x="1211.5" y="413.3" width="49.9" height="176" fill="url(#khak)" stroke="none" stroke-width="0" />
<polygon points="1211.5,589.3 1261.4,589.3 1250,633 1223,633" fill="url(#khakc)" stroke="none" stroke-width="0" />
<path d="M1211.5,589.3 V413.3 H1261.4 V589.3" fill="none" stroke="#000" stroke-width="1.6"/>
<path d="M1211.5,589.3 L1223,633 M1261.4,589.3 L1250,633" fill="none" stroke="#000" stroke-width="1"/>
<rect x="1224" y="637.5" width="25" height="9" fill="url(#khak)" stroke="#111" stroke-width="1" rx="1.5"/>
<rect x="1225.5" y="634.5" width="25" height="3.8" fill="#e8e8e8" stroke="#222" stroke-width="0.8" />
<polygon points="1221.5,629 1225.5,634.5 1225.5,638.3 1221.5,638.3" fill="#e8e8e8" stroke="#222" stroke-width="0.6" />
<rect x="1206" y="625" width="14" height="16" fill="#e0e0e0" stroke="#000" stroke-width="1.8" rx="2"/>
<rect x="1209.5" y="627.5" width="7" height="3" fill="#fff" stroke="#000" stroke-width="0.9" />
<rect x="1209.5" y="635.5" width="7" height="3" fill="#fff" stroke="#000" stroke-width="0.9" />
<rect x="1220" y="631.5" width="2" height="3" fill="#fff" stroke="#000" stroke-width="0.6" />
<circle cx="1236.45" cy="425.3" r="6.8" fill="#000" stroke="#fff" stroke-width="1.2"/>
<rect x="1220.1" y="470.2" width="35.3" height="18.5" fill="#00e4e4" stroke="none" stroke-width="0" />
<path d="M1220.1,488.7 V470.2 H1255.4" fill="none" stroke="#000" stroke-width="1.3"/>
<path d="M1220.1,488.7 H1255.4 V470.2" fill="none" stroke="#fff" stroke-width="1.3"/>
<text x="1236.45" y="484.5" text-anchor="middle" font-size="14" fill="#003048">0</text>
<circle cx="1236.45" cy="520" r="13" fill="#3e3a30" fill-opacity="0.78"/>
<text x="1236.45" y="526" text-anchor="middle" font-family="Liberation Serif" font-weight="bold" font-size="15" fill="#fff">10</text>
<polyline points="787.8,646.5 787.8,672.3" fill="none" stroke="#ffffff" stroke-width="3" stroke-linejoin="miter" stroke-linecap="butt"/>
<polygon points="782.3,671.3 793.3,671.3 787.8,681.3" fill="url(#arrg)" stroke="#fff" stroke-width="1"/>
<rect x="777.8" y="684" width="20" height="20" fill="#fff" stroke="#000" stroke-width="1.1" />
<rect x="780.8" y="688" width="14" height="5.5" fill="#0a2a0a" stroke="#000" stroke-width="0.6" />
<line x1="782.3" y1="690.7" x2="793.3" y2="690.7" stroke="#2f2" stroke-width="1.6" stroke-dasharray="1.3 0.9"/>
<polygon points="777.8,704 797.8,704 791.8,713.5 783.8,713.5" fill="#fff" stroke="#000" stroke-width="1.1" />
<polyline points="836.8,646.5 836.8,672.3" fill="none" stroke="#ffffff" stroke-width="3" stroke-linejoin="miter" stroke-linecap="butt"/>
<polygon points="831.3,671.3 842.3,671.3 836.8,681.3" fill="url(#arrg)" stroke="#fff" stroke-width="1"/>
<rect x="826.8" y="684" width="20" height="20" fill="#fff" stroke="#000" stroke-width="1.1" />
<rect x="829.8" y="688" width="14" height="5.5" fill="#0a2a0a" stroke="#000" stroke-width="0.6" />
<line x1="831.3" y1="690.7" x2="842.3" y2="690.7" stroke="#2f2" stroke-width="1.6" stroke-dasharray="1.3 0.9"/>
<polygon points="826.8,704 846.8,704 840.8,713.5 832.8,713.5" fill="#fff" stroke="#000" stroke-width="1.1" />
<polyline points="886.9,646.5 886.9,672.3" fill="none" stroke="#ffffff" stroke-width="3" stroke-linejoin="miter" stroke-linecap="butt"/>
<polygon points="881.4,671.3 892.4,671.3 886.9,681.3" fill="url(#arrg)" stroke="#fff" stroke-width="1"/>
<rect x="876.9" y="684" width="20" height="20" fill="#fff" stroke="#000" stroke-width="1.1" />
<rect x="879.9" y="688" width="14" height="5.5" fill="#0a2a0a" stroke="#000" stroke-width="0.6" />
<line x1="881.4" y1="690.7" x2="892.4" y2="690.7" stroke="#2f2" stroke-width="1.6" stroke-dasharray="1.3 0.9"/>
<polygon points="876.9,704 896.9,704 890.9,713.5 882.9,713.5" fill="#fff" stroke="#000" stroke-width="1.1" />
<polyline points="937.6,646.5 937.6,672.3" fill="none" stroke="#ffffff" stroke-width="3" stroke-linejoin="miter" stroke-linecap="butt"/>
<polygon points="932.1,671.3 943.1,671.3 937.6,681.3" fill="url(#arrg)" stroke="#fff" stroke-width="1"/>
<rect x="927.6" y="684" width="20" height="20" fill="#fff" stroke="#000" stroke-width="1.1" />
<rect x="930.6" y="688" width="14" height="5.5" fill="#0a2a0a" stroke="#000" stroke-width="0.6" />
<line x1="932.1" y1="690.7" x2="943.1" y2="690.7" stroke="#2f2" stroke-width="1.6" stroke-dasharray="1.3 0.9"/>
<polygon points="927.6,704 947.6,704 941.6,713.5 933.6,713.5" fill="#fff" stroke="#000" stroke-width="1.1" />
<polyline points="987.6,646.5 987.6,672.3" fill="none" stroke="#ffffff" stroke-width="3" stroke-linejoin="miter" stroke-linecap="butt"/>
<polygon points="982.1,671.3 993.1,671.3 987.6,681.3" fill="url(#arrg)" stroke="#fff" stroke-width="1"/>
<rect x="977.6" y="684" width="20" height="20" fill="#fff" stroke="#000" stroke-width="1.1" />
<rect x="980.6" y="688" width="14" height="5.5" fill="#0a2a0a" stroke="#000" stroke-width="0.6" />
<line x1="982.1" y1="690.7" x2="993.1" y2="690.7" stroke="#2f2" stroke-width="1.6" stroke-dasharray="1.3 0.9"/>
<polygon points="977.6,704 997.6,704 991.6,713.5 983.6,713.5" fill="#fff" stroke="#000" stroke-width="1.1" />
<polyline points="1038.6,646.5 1038.6,672.3" fill="none" stroke="#ffffff" stroke-width="3" stroke-linejoin="miter" stroke-linecap="butt"/>
<polygon points="1033.1,671.3 1044.1,671.3 1038.6,681.3" fill="url(#arrg)" stroke="#fff" stroke-width="1"/>
<rect x="1028.6" y="684" width="20" height="20" fill="#fff" stroke="#000" stroke-width="1.1" />
<rect x="1031.6" y="688" width="14" height="5.5" fill="#0a2a0a" stroke="#000" stroke-width="0.6" />
<line x1="1033.1" y1="690.7" x2="1044.1" y2="690.7" stroke="#2f2" stroke-width="1.6" stroke-dasharray="1.3 0.9"/>
<polygon points="1028.6,704 1048.6,704 1042.6,713.5 1034.6,713.5" fill="#fff" stroke="#000" stroke-width="1.1" />
<polyline points="1087.8,646.5 1087.8,672.3" fill="none" stroke="#ffffff" stroke-width="3" stroke-linejoin="miter" stroke-linecap="butt"/>
<polygon points="1082.3,671.3 1093.3,671.3 1087.8,681.3" fill="url(#arrg)" stroke="#fff" stroke-width="1"/>
<rect x="1077.8" y="684" width="20" height="20" fill="#fff" stroke="#000" stroke-width="1.1" />
<rect x="1080.8" y="688" width="14" height="5.5" fill="#0a2a0a" stroke="#000" stroke-width="0.6" />
<line x1="1082.3" y1="690.7" x2="1093.3" y2="690.7" stroke="#2f2" stroke-width="1.6" stroke-dasharray="1.3 0.9"/>
<polygon points="1077.8,704 1097.8,704 1091.8,713.5 1083.8,713.5" fill="#fff" stroke="#000" stroke-width="1.1" />
<polyline points="1138.6,646.5 1138.6,672.3" fill="none" stroke="#ffffff" stroke-width="3" stroke-linejoin="miter" stroke-linecap="butt"/>
<polygon points="1133.1,671.3 1144.1,671.3 1138.6,681.3" fill="url(#arrg)" stroke="#fff" stroke-width="1"/>
<rect x="1128.6" y="684" width="20" height="20" fill="#fff" stroke="#000" stroke-width="1.1" />
<rect x="1131.6" y="688" width="14" height="5.5" fill="#0a2a0a" stroke="#000" stroke-width="0.6" />
<line x1="1133.1" y1="690.7" x2="1144.1" y2="690.7" stroke="#2f2" stroke-width="1.6" stroke-dasharray="1.3 0.9"/>
<polygon points="1128.6,704 1148.6,704 1142.6,713.5 1134.6,713.5" fill="#fff" stroke="#000" stroke-width="1.1" />
<polyline points="1188.6,646.5 1188.6,672.3" fill="none" stroke="#ffffff" stroke-width="3" stroke-linejoin="miter" stroke-linecap="butt"/>
<polygon points="1183.1,671.3 1194.1,671.3 1188.6,681.3" fill="url(#arrg)" stroke="#fff" stroke-width="1"/>
<rect x="1178.6" y="684" width="20" height="20" fill="#fff" stroke="#000" stroke-width="1.1" />
<rect x="1181.6" y="688" width="14" height="5.5" fill="#0a2a0a" stroke="#000" stroke-width="0.6" />
<line x1="1183.1" y1="690.7" x2="1194.1" y2="690.7" stroke="#2f2" stroke-width="1.6" stroke-dasharray="1.3 0.9"/>
<polygon points="1178.6,704 1198.6,704 1192.6,713.5 1184.6,713.5" fill="#fff" stroke="#000" stroke-width="1.1" />
<polyline points="1237.6,646.5 1237.6,672.3" fill="none" stroke="#ffffff" stroke-width="3" stroke-linejoin="miter" stroke-linecap="butt"/>
<polygon points="1232.1,671.3 1243.1,671.3 1237.6,681.3" fill="url(#arrg)" stroke="#fff" stroke-width="1"/>
<rect x="1227.6" y="684" width="20" height="20" fill="#fff" stroke="#000" stroke-width="1.1" />
<rect x="1230.6" y="688" width="14" height="5.5" fill="#0a2a0a" stroke="#000" stroke-width="0.6" />
<line x1="1232.1" y1="690.7" x2="1243.1" y2="690.7" stroke="#2f2" stroke-width="1.6" stroke-dasharray="1.3 0.9"/>
<polygon points="1227.6,704 1247.6,704 1241.6,713.5 1233.6,713.5" fill="#fff" stroke="#000" stroke-width="1.1" />
<polyline points="787.8,713.5 787.8,727.5 836.8,727.5 836.8,713.5" fill="none" stroke="#ffffff" stroke-width="3" stroke-linejoin="miter" stroke-linecap="butt"/>
<polyline points="812.3,727.5 812.3,745" fill="none" stroke="#ffffff" stroke-width="3" stroke-linejoin="miter" stroke-linecap="butt"/>
<polygon points="806.8,744 817.8,744 812.3,754" fill="url(#arrg)" stroke="#fff" stroke-width="1"/>
<polyline points="937.6,713.5 937.6,727.5 987.6,727.5 987.6,713.5" fill="none" stroke="#ffffff" stroke-width="3" stroke-linejoin="miter" stroke-linecap="butt"/>
<polyline points="962.6,727.5 962.6,745" fill="none" stroke="#ffffff" stroke-width="3" stroke-linejoin="miter" stroke-linecap="butt"/>
<polygon points="957.1,744 968.1,744 962.6,754" fill="url(#arrg)" stroke="#fff" stroke-width="1"/>
<polyline points="1087.8,713.5 1087.8,727.5 1138.6,727.5 1138.6,713.5" fill="none" stroke="#ffffff" stroke-width="3" stroke-linejoin="miter" stroke-linecap="butt"/>
<polyline points="1113.2,727.5 1113.2,745" fill="none" stroke="#ffffff" stroke-width="3" stroke-linejoin="miter" stroke-linecap="butt"/>
<polygon points="1107.7,744 1118.7,744 1113.2,754" fill="url(#arrg)" stroke="#fff" stroke-width="1"/>
<polyline points="886.9,713.5 886.9,758" fill="none" stroke="#ffffff" stroke-width="3" stroke-linejoin="miter" stroke-linecap="butt"/>
<polyline points="886.9,773 886.9,792" fill="none" stroke="#ffffff" stroke-width="3" stroke-linejoin="miter" stroke-linecap="butt"/>
<polygon points="881.4,791 892.4,791 886.9,801" fill="url(#arrg)" stroke="#fff" stroke-width="1"/>
<polyline points="1038.6,713.5 1038.6,758" fill="none" stroke="#ffffff" stroke-width="3" stroke-linejoin="miter" stroke-linecap="butt"/>
<polyline points="1038.6,773 1038.6,792" fill="none" stroke="#ffffff" stroke-width="3" stroke-linejoin="miter" stroke-linecap="butt"/>
<polygon points="1033.1,791 1044.1,791 1038.6,801" fill="url(#arrg)" stroke="#fff" stroke-width="1"/>
<polyline points="1188.6,713.5 1188.6,758" fill="none" stroke="#ffffff" stroke-width="3" stroke-linejoin="miter" stroke-linecap="butt"/>
<polyline points="1188.6,773 1188.6,792" fill="none" stroke="#ffffff" stroke-width="3" stroke-linejoin="miter" stroke-linecap="butt"/>
<polygon points="1183.1,791 1194.1,791 1188.6,801" fill="url(#arrg)" stroke="#fff" stroke-width="1"/>
<polyline points="1237.6,713.5 1237.6,745" fill="none" stroke="#ffffff" stroke-width="3" stroke-linejoin="miter" stroke-linecap="butt"/>
<polygon points="1232.1,744 1243.1,744 1237.6,754" fill="url(#arrg)" stroke="#fff" stroke-width="1"/>
<rect x="805" y="757.5" width="462.7" height="15.5" fill="#bdbdbd" stroke="#fff" stroke-width="1.2"/>
<rect x="806.5" y="759" width="459.7" height="12.5" fill="none" stroke="#555" stroke-width="0.8"/>
<rect x="808" y="760.5" width="456.7" height="9.5" fill="none" stroke="#f4f4f4" stroke-width="0.8" stroke-dasharray="1 1.2"/>
<circle cx="818" cy="765.25" r="6.3" fill="#e4e4e4" stroke="#000" stroke-width="1.1"/>
<path d="M813.7,760.95 L822.3,769.55 M813.7,769.55 L822.3,760.95" stroke="#000" stroke-width="1"/>
<circle cx="1241" cy="765.25" r="6.3" fill="#e4e4e4" stroke="#000" stroke-width="1.1"/>
<path d="M1236.7,760.95 L1245.3,769.55 M1236.7,769.55 L1245.3,760.95" stroke="#000" stroke-width="1"/>
<polyline points="1248.7,757.5 1267.7,744.5 1267.7,757.5" fill="none" stroke="#eee" stroke-width="1"/>
<circle cx="792" cy="764" r="6" fill="#999" stroke="#e6e6e6" stroke-width="1"/>
<rect x="787.2" y="802.5" width="458" height="16" fill="#bdbdbd" stroke="#fff" stroke-width="1.2"/>
<rect x="788.7" y="804" width="455" height="13" fill="none" stroke="#555" stroke-width="0.8"/>
<rect x="790.2" y="805.5" width="452" height="10" fill="none" stroke="#f4f4f4" stroke-width="0.8" stroke-dasharray="1 1.2"/>
<circle cx="803" cy="810.5" r="6.3" fill="#e4e4e4" stroke="#000" stroke-width="1.1"/>
<path d="M798.7,806.2 L807.3,814.8 M798.7,814.8 L807.3,806.2" stroke="#000" stroke-width="1"/>
<circle cx="1224" cy="810.5" r="6.3" fill="#e4e4e4" stroke="#000" stroke-width="1.1"/>
<path d="M1219.7,806.2 L1228.3,814.8 M1219.7,814.8 L1228.3,806.2" stroke="#000" stroke-width="1"/>
<polyline points="1226.2,802.5 1245.2,789.5 1245.2,802.5" fill="none" stroke="#eee" stroke-width="1"/>
<circle cx="774" cy="809" r="6" fill="#999" stroke="#e6e6e6" stroke-width="1"/>
<polyline points="1264.4,773 1264.4,868" fill="none" stroke="#ffffff" stroke-width="3" stroke-linejoin="miter" stroke-linecap="butt"/>
<polygon points="1258.9,867.2 1269.9,867.2 1264.4,877.2" fill="url(#arrg)" stroke="#fff" stroke-width="1"/>
<polyline points="1237.2,818.5 1237.2,843 1264.4,843" fill="none" stroke="#ffffff" stroke-width="3" stroke-linejoin="miter" stroke-linecap="butt"/>
<polyline points="1320.4,147.5 1320.4,177.2 1337.3,177.2 1337.3,189.7" fill="none" stroke="#ffffff" stroke-width="3" stroke-linejoin="miter" stroke-linecap="butt"/>
<polygon points="1331.8,188.7 1342.8,188.7 1337.3,198.7" fill="url(#arrg)" stroke="#fff" stroke-width="1"/>
<rect x="1328.5" y="200" width="93.9" height="16.7" fill="#d9d9d9" stroke="#fff" stroke-width="1.2"/>
<rect x="1330" y="201.5" width="90.9" height="13.7" fill="none" stroke="#555" stroke-width="0.8"/>
<rect x="1331.5" y="203" width="87.9" height="10.7" fill="none" stroke="#f4f4f4" stroke-width="0.8" stroke-dasharray="1 1.2"/>
<circle cx="1340" cy="208.35" r="6.3" fill="#e4e4e4" stroke="#000" stroke-width="1.1"/>
<path d="M1335.7,204.05 L1344.3,212.65 M1335.7,212.65 L1344.3,204.05" stroke="#000" stroke-width="1"/>
<circle cx="1408" cy="208.35" r="6.3" fill="#e4e4e4" stroke="#000" stroke-width="1.1"/>
<path d="M1403.7,204.05 L1412.3,212.65 M1403.7,212.65 L1412.3,204.05" stroke="#000" stroke-width="1"/>
<polyline points="1403.4,200 1422.4,187 1422.4,200" fill="none" stroke="#eee" stroke-width="1"/>
<circle cx="1317.7" cy="209" r="6" fill="#999" stroke="#e6e6e6" stroke-width="1"/>
<polyline points="1415.7,216.7 1415.7,243.4" fill="none" stroke="#ffffff" stroke-width="3" stroke-linejoin="miter" stroke-linecap="butt"/>
<polygon points="1410.2,242.4 1421.2,242.4 1415.7,252.4" fill="url(#arrg)" stroke="#fff" stroke-width="1"/>
<rect x="1401.5" y="254.3" width="107.5" height="16.1" fill="#d9d9d9" stroke="#fff" stroke-width="1.2"/>
<rect x="1403" y="255.8" width="104.5" height="13.1" fill="none" stroke="#555" stroke-width="0.8"/>
<rect x="1404.5" y="257.3" width="101.5" height="10.1" fill="none" stroke="#f4f4f4" stroke-width="0.8" stroke-dasharray="1 1.2"/>
<circle cx="1413" cy="262.35" r="6.3" fill="#e4e4e4" stroke="#000" stroke-width="1.1"/>
<path d="M1408.7,258.05 L1417.3,266.65 M1408.7,266.65 L1417.3,258.05" stroke="#000" stroke-width="1"/>
<circle cx="1496" cy="262.35" r="6.3" fill="#e4e4e4" stroke="#000" stroke-width="1.1"/>
<path d="M1491.7,258.05 L1500.3,266.65 M1491.7,266.65 L1500.3,258.05" stroke="#000" stroke-width="1"/>
<polyline points="1490,254.3 1509,241.3 1509,254.3" fill="none" stroke="#eee" stroke-width="1"/>
<circle cx="1390.7" cy="262.6" r="6" fill="#999" stroke="#e6e6e6" stroke-width="1"/>
<polyline points="1443.9,270.4 1443.9,333" fill="none" stroke="#ffffff" stroke-width="3" stroke-linejoin="miter" stroke-linecap="butt"/>
<polygon points="1438.4,332.3 1449.4,332.3 1443.9,342.3" fill="url(#arrg)" stroke="#fff" stroke-width="1"/>
<rect x="1432.5" y="282.2" width="20" height="6" fill="#888" stroke="#000" stroke-width="1.2" />
<polyline points="1499,270.4 1499,299.8" fill="none" stroke="#ffffff" stroke-width="3" stroke-linejoin="miter" stroke-linecap="butt"/>
<polygon points="1493.5,298.8 1504.5,298.8 1499,308.8" fill="url(#arrg)" stroke="#fff" stroke-width="1"/>
<rect x="1505" y="313.6" width="8" height="43" fill="#d8d8d8" stroke="#222" stroke-width="1" />
<rect x="1451" y="309.6" width="54" height="26" fill="#d6d6d6" stroke="#222" stroke-width="1" />
<rect x="1458" y="314.6" width="40" height="15" fill="#dcdcdc" stroke="#222" stroke-width="1" />
<line x1="1467" y1="317.6" x2="1467" y2="324.6" stroke="#222" stroke-width="1.5"/>
<line x1="1489" y1="317.6" x2="1489" y2="324.6" stroke="#222" stroke-width="1.5"/>
<path d="M1451,335.6 H1505 V357.6 H1499 V345.6 H1457 V357.6 H1451 Z" fill="#12c4cc" stroke="#111" stroke-width="0.8"/>
<polygon points="1471,345.6 1485,345.6 1479,351.6 1477,351.6" fill="#d8cfa8" stroke="#333" stroke-width="0.6" />
<rect x="1491" y="348.6" width="8" height="8" fill="#f4f4f4" stroke="#555" stroke-width="0.6" />
<polyline points="1479,357 1479,363" fill="none" stroke="#ddd" stroke-width="1.2" stroke-linejoin="miter" stroke-linecap="butt" stroke-dasharray="1.5 1.5"/>
<polygon points="1473.5,362 1484.5,362 1479,372" fill="url(#arrg)" stroke="#fff" stroke-width="1"/>
<path d="M1440,344 V350 H1448 M1444.3,343 V352" stroke="#111" stroke-width="1.2" fill="none"/>
<rect x="1439" y="351" width="10" height="2.5" fill="#eee" stroke="#000" stroke-width="0.6" />
<path d="M1433.5,332.5 L1433.5,327.5 L1425.8,314.2 H1404.3 V318.5 L1406.3,320.5 L1404.3,322.5 V329.5 L1406.3,331.5 Z" fill="#fff" stroke="#000" stroke-width="1"/>
<rect x="1404.3" y="332.5" width="33.2" height="21.7" fill="#fff" stroke="#000" stroke-width="1" />
<rect x="1431" y="336" width="3" height="3.5" fill="#fff" stroke="#000" stroke-width="0.9" />
<rect x="1411.8" y="335" width="5" height="2" fill="#fff" stroke="#000" stroke-width="0.9" />
<rect x="1414.8" y="340" width="5" height="2" fill="#fff" stroke="#000" stroke-width="0.9" />
<rect x="1409.3" y="344.5" width="27.9" height="11.2" rx="1.5" fill="url(#panelg)" stroke="#000" stroke-width="1"/>
<circle cx="1413.8" cy="349.5" r="1.2" fill="#fff" stroke="#000" stroke-width="0.6"/><circle cx="1416.3" cy="347" r="1.2" fill="#fff" stroke="#000" stroke-width="0.6"/><circle cx="1434.5" cy="346.5" r="1.2" fill="#fff" stroke="#000" stroke-width="0.6"/>
<polygon points="1411.72,354.7 1434.72,354.7 1425.02,363.7 1421.42,363.7" fill="url(#funng)" stroke="#000" stroke-width="1" />
<rect x="1421.42" y="363.7" width="3.6" height="3.5" fill="#d9d0aa" stroke="#000" stroke-width="0.8" />
<polyline points="1419.3,314 1419.3,305" fill="none" stroke="#ddd" stroke-width="1.2" stroke-linejoin="miter" stroke-linecap="butt" stroke-dasharray="1.5 1.5"/>
<polygon points="1413.8,304.2 1424.8,304.2 1419.3,294.2" fill="url(#arrgu)" stroke="#fff" stroke-width="1"/>
<polyline points="1423.3,368 1423.3,406" fill="none" stroke="#ffffff" stroke-width="3" stroke-linejoin="miter" stroke-linecap="butt"/>
<polygon points="1417.8,405 1428.8,405 1423.3,415" fill="url(#arrg)" stroke="#fff" stroke-width="1"/>
<rect x="1522.4" y="297.5" width="80" height="23.8" rx="1.5" fill="url(#btng)" stroke="#888" stroke-width="1"/>
<text x="1562.4" y="313.5" text-anchor="middle" font-size="11.5" fill="#222">Bypass ES202</text>
<rect x="1400" y="415.2" width="49" height="72.8" fill="url(#khak)" stroke="#000" stroke-width="1" />
<polygon points="1400,488 1449,488 1438,510 1411,510" fill="url(#khakc)" stroke="#000" stroke-width="1" />
<path d="M1411.5,510 H1437.5 V513 L1434,517 H1415 L1411.5,513 Z" fill="url(#khak)" stroke="#000" stroke-width="0.9"/>
<rect x="1418" y="517" width="12.5" height="7" fill="url(#khak)" stroke="#000" stroke-width="0.9" />
<circle cx="1423.7" cy="428.9" r="7" fill="#000" stroke="#fff" stroke-width="1.2"/>
<circle cx="1424" cy="460.4" r="13" fill="#45413a" fill-opacity="0.9"/>
<text x="1424" y="466" text-anchor="middle" font-family="Liberation Serif" font-weight="bold" font-size="15" fill="#fff">B1</text>
<circle cx="1424" cy="498.5" r="7" fill="#f00" stroke="#fff" stroke-width="1.2"/>
<polyline points="1424,524 1424,541" fill="none" stroke="#ffffff" stroke-width="4" stroke-linejoin="miter" stroke-linecap="butt"/>
<rect x="1408.1" y="578.6" width="3.8" height="53.3" fill="#e4e3da" stroke="#000" stroke-width="0.9" />
<rect x="1430.3" y="578.6" width="3.9" height="53.3" fill="#e4e3da" stroke="#000" stroke-width="0.9" />
<polygon points="1421.3,544.7 1427.7,544.7 1438.1,556.9 1407.5,556.9" fill="url(#sepg)" stroke="#000" stroke-width="0.9" />
<polygon points="1407.5,556.9 1438.1,556.9 1429.7,567.5 1417.5,567.5" fill="url(#sepg)" stroke="#000" stroke-width="0.9" />
<rect x="1420.8" y="541.9" width="7.3" height="2.8" fill="#eee" stroke="#000" stroke-width="1" />
<polygon points="1405.5,552.9 1413.5,548.4 1414.5,551.4 1407.5,554.9" fill="#e8e8e0" stroke="#000" stroke-width="0.7" />
<polygon points="1417.5,567.5 1429.7,567.5 1429.7,582.5 1411.9,582.5 1411.9,577.9 1417.5,573.9" fill="url(#sepg)" stroke="#000" stroke-width="0.9" />
<rect x="1411.9" y="582.5" width="17.8" height="37.8" fill="url(#sepg)" stroke="#000" stroke-width="1" />
<path d="M1430,568.9 L1432.5,569.9 Q1439.5,574.9 1440,579.9 V606.9" fill="none" stroke="#000" stroke-width="4.6"/>
<path d="M1430,568.9 L1432.5,569.9 Q1439.5,574.9 1440,579.9 V606.9" fill="none" stroke="#e6e5dc" stroke-width="2.8"/>
<rect x="1435.5" y="605.9" width="5" height="8" fill="#eee" stroke="#000" stroke-width="0.8" />
<path d="M1436.5,607.4 L1438,612.9 L1439.5,607.4" fill="none" stroke="#000" stroke-width="0.7"/>
<rect x="1436" y="615.4" width="4" height="5" fill="#e6e6e6" stroke="#000" stroke-width="0.8" />
<rect x="1398.1" y="582.5" width="8.8" height="11.1" fill="#eee" stroke="#000" stroke-width="1" />
<rect x="1401" y="584.9" width="3.5" height="5.5" fill="#fff" stroke="#000" stroke-width="0.8" />
<path d="M1398.5,595.9 L1401.5,600.9 L1406.5,595.9" fill="none" stroke="#000" stroke-width="2.2"/>
<path d="M1398.5,595.9 L1401.5,600.9 L1406.5,595.9" fill="none" stroke="#eee" stroke-width="1"/>
<polygon points="1400.5,615.9 1405.5,612.9 1405.5,615.9" fill="#bbb" stroke="#000" stroke-width="0.5" />
<rect x="1409.7" y="621.4" width="28.9" height="2.2" fill="#f2f2f2" stroke="#000" stroke-width="0.9" />
<polygon points="1411.9,623.6 1429.7,623.6 1424.5,631.4 1417.5,631.4" fill="url(#sepg)" stroke="#000" stroke-width="0.9" />
<rect x="1407.6" y="625.9" width="4.8" height="1.6" fill="#fff" stroke="#000" stroke-width="0.5" />
<rect x="1429.8" y="625.9" width="4.8" height="1.6" fill="#fff" stroke="#000" stroke-width="0.5" />
<path d="M1420.5,632.9 H1427.5 L1430.8,636.9 V639.9 L1427.5,643.9 H1420.5 L1417.1,639.9 V636.9 Z" fill="url(#sepg)" stroke="#000" stroke-width="0.9"/>
<text x="1377.8" y="615" font-size="11.5" fill="#fff">BA1</text>
<polyline points="1424,637 1424,652" fill="none" stroke="#ffffff" stroke-width="3" stroke-linejoin="miter" stroke-linecap="butt"/>
<rect x="1417.4" y="652.2" width="14.8" height="18.5" fill="url(#khak)" stroke="#111" stroke-width="1.2" rx="2"/>
<text x="1397" y="667" font-size="11.5" fill="#fff">MA</text>
<polyline points="1424,670.7 1424,688.4" fill="none" stroke="#ffffff" stroke-width="3" stroke-linejoin="miter" stroke-linecap="butt"/>
<polygon points="1418.5,687.4 1429.5,687.4 1424,697.4" fill="url(#arrg)" stroke="#fff" stroke-width="1"/>
<rect x="1397" y="703.7" width="54.9" height="15.9" fill="#fff" stroke="#000" stroke-width="0.8"/>
<text x="1424.45" y="716.87" text-anchor="middle" font-family="Liberation Sans" font-size="14.5" fill="#000">B1 / B2</text>
<rect x="1407.2" y="770.5" width="76.3" height="15.8" fill="#fff" stroke="#000" stroke-width="0.8"/>
<text x="1445.35" y="783.62" text-anchor="middle" font-family="Liberation Sans" font-size="14.5" fill="#000">Resíduos</text>
<line x1="1445.4" y1="786.3" x2="1445.4" y2="804.8" stroke="#f5a000" stroke-width="3"/>
<polygon points="1439.9,803.8 1450.9,803.8 1445.4,813.8" fill="url(#arrg)" stroke="#fff" stroke-width="1"/>
<rect x="1391.4" y="815.3" width="143" height="18.4" fill="#bdbdbd" stroke="#fff" stroke-width="1.5" />
<rect x="1393.2" y="817.1" width="139.4" height="14.8" fill="none" stroke="#000" stroke-width="1.2" />
<path d="M1401,818.5 L1408,829.8 L1415,818.5 M1414.9,818.5 L1421.9,829.8 L1428.9,818.5 M1428.8,818.5 L1435.8,829.8 L1442.8,818.5 M1442.7,818.5 L1449.7,829.8 L1456.7,818.5 M1456.6,818.5 L1463.6,829.8 L1470.6,818.5 M1470.5,818.5 L1477.5,829.8 L1484.5,818.5 M1484.4,818.5 L1491.4,829.8 L1498.4,818.5 M1498.3,818.5 L1505.3,829.8 L1512.3,818.5 M1512.2,818.5 L1519.2,829.8 L1526.2,818.5" fill="none" stroke="#000" stroke-width="4.6" stroke-linejoin="miter"/>
<path d="M1401,818.5 L1408,829.8 L1415,818.5 M1414.9,818.5 L1421.9,829.8 L1428.9,818.5 M1428.8,818.5 L1435.8,829.8 L1442.8,818.5 M1442.7,818.5 L1449.7,829.8 L1456.7,818.5 M1456.6,818.5 L1463.6,829.8 L1470.6,818.5 M1470.5,818.5 L1477.5,829.8 L1484.5,818.5 M1484.4,818.5 L1491.4,829.8 L1498.4,818.5 M1498.3,818.5 L1505.3,829.8 L1512.3,818.5 M1512.2,818.5 L1519.2,829.8 L1526.2,818.5" fill="none" stroke="#fff" stroke-width="2.2" stroke-linejoin="miter"/>
<line x1="1400" y1="817.8" x2="1526" y2="817.8" stroke="#000" stroke-width="1.5"/>
<polyline points="1515.8,815 1534.6,803.3 1534.6,815" fill="none" stroke="#eee" stroke-width="1"/>
<circle cx="1380.2" cy="825.5" r="6" fill="#999" stroke="#e6e6e6" stroke-width="1"/>
<polyline points="1524.3,833.2 1524.3,851 1545.7,851 1545.7,865" fill="none" stroke="#ffffff" stroke-width="3" stroke-linejoin="miter" stroke-linecap="butt"/>
<polygon points="1540.2,864 1551.2,864 1545.7,874" fill="url(#arrg)" stroke="#fff" stroke-width="1"/>
<polyline points="1601.7,445.5 1601.7,475.7 1633.7,475.7 1633.7,511" fill="none" stroke="#ffffff" stroke-width="3" stroke-linejoin="miter" stroke-linecap="butt"/>
<polygon points="1628.2,510 1639.2,510 1633.7,520" fill="url(#arrg)" stroke="#fff" stroke-width="1"/>
<rect x="1605.2" y="520" width="56" height="79" fill="url(#khak)" stroke="#000" stroke-width="1" />
<polygon points="1605.2,599 1661.2,599 1648,617.8 1619,617.8" fill="url(#khakc)" stroke="#000" stroke-width="1" />
<path d="M1619.5,617.8 H1647.5 V622 Q1647.5,625 1644.5,625 H1622.5 Q1619.5,625 1619.5,622 Z" fill="url(#khak)" stroke="#000" stroke-width="0.9"/>
<circle cx="1634.8" cy="544" r="7" fill="#000" stroke="#fff" stroke-width="1.2"/>
<rect x="1621.81" y="623.95" width="23.38" height="1.72" fill="#000" stroke="none" stroke-width="0" rx="0.86"/>
<rect x="1626.12" y="626.23" width="16" height="1.23" fill="#fff" stroke="none" stroke-width="0" rx="0.62"/>
<circle cx="1633.5" cy="634.6" r="8" fill="#dcdcdc" stroke="#000" stroke-width="0.9"/>
<path d="M1636.27,634.6 L1641.5,634.6 M1635.46,636.56 L1639.16,640.26 M1633.5,637.37 L1633.5,642.6 M1631.54,636.56 L1627.84,640.26 M1630.73,634.6 L1625.5,634.6 M1631.54,632.64 L1627.84,628.94 M1633.5,631.83 L1633.5,626.6 M1635.46,632.64 L1639.16,628.94" stroke="#000" stroke-width="0.7"/>
<circle cx="1633.5" cy="634.6" r="2.77" fill="#6a6a6a" stroke="#000" stroke-width="0.7"/>
<rect x="1624.39" y="642.6" width="16" height="1.23" fill="#fff" stroke="none" stroke-width="0" rx="0.62"/>
<rect x="1621.81" y="643.65" width="23.38" height="1.72" fill="#000" stroke="none" stroke-width="0" rx="0.86"/>
<polyline points="1633.5,646.5 1633.5,684" fill="none" stroke="#ffffff" stroke-width="3" stroke-linejoin="miter" stroke-linecap="butt"/>
<polygon points="1628,683 1639,683 1633.5,693" fill="url(#arrg)" stroke="#fff" stroke-width="1"/>
<path d="M1629,693 H1648 Q1649.5,693 1649.5,695 V700 H1629 Z" fill="url(#grayg)" stroke="#111" stroke-width="0.8"/>
<path d="M1629,700 H1650 L1674,706 Q1679.5,707 1679.5,711 V715 H1673 V713 L1654,713.5 L1629,704 Z" fill="url(#motg)" stroke="#111" stroke-width="0.9"/>
<rect x="1650" y="700" width="6" height="2.5" fill="#fff" stroke="#111" stroke-width="0.6" />
<rect x="1672" y="713" width="7.5" height="7" fill="#ddd" stroke="#111" stroke-width="0.8" />
<rect x="1660" y="714" width="10" height="2" fill="#fff" stroke="#111" stroke-width="0.5" />
<line x1="1629.5" y1="704" x2="1629.5" y2="722" stroke="#ddd" stroke-width="1"/>
<polyline points="1676.5,720 1676.5,758" fill="none" stroke="#ffffff" stroke-width="3" stroke-linejoin="miter" stroke-linecap="butt"/>
<polygon points="1671,757.4 1682,757.4 1676.5,767.4" fill="url(#arrg)" stroke="#fff" stroke-width="1"/>
<path d="M1674.5,767 V786 M1678.5,767 V786" stroke="#222" stroke-width="1.2"/>
<line x1="1676.5" y1="768" x2="1676.5" y2="786" stroke="#777" stroke-width="2"/>
<rect x="1695.3" y="758.9" width="12.4" height="11.7" fill="#00e000" stroke="#064" stroke-width="1" rx="1"/>
<polyline points="1695.3,765.3 1687.2,765.3 1687.2,787" fill="none" stroke="#111" stroke-width="1.2" stroke-linejoin="miter" stroke-linecap="butt"/>
<path d="M1672.3,787 H1687 L1697,791 V813.3 H1672.3 Z" fill="#e2e2e2" stroke="#111" stroke-width="0.9"/>
<path d="M1697,800 Q1709,802 1710,816 L1700,814 Q1697,810 1697,806 Z" fill="#d9d9d9" stroke="#111" stroke-width="0.9"/>
<rect x="1674" y="804" width="10" height="9" fill="#f0f0f0" stroke="#111" stroke-width="0.8" />
<line x1="1665" y1="814.3" x2="1691" y2="814.3" stroke="#000" stroke-width="2.6" stroke-linecap="round"/>
<path d="M1662,816.5 H1694 L1702,824 V853 L1699,865 H1659 L1655.8,853 V824 Z" fill="#d8d8d8" stroke="#111" stroke-width="0.9"/>
<circle cx="1677.8" cy="841" r="16" fill="#e0e0e0" stroke="#111" stroke-width="1"/>
<circle cx="1677.8" cy="841" r="11" fill="#e8e8e8" stroke="#111" stroke-width="1"/>
<circle cx="1677.8" cy="843" r="6" fill="#eee" stroke="#111" stroke-width="1"/>
<path d="M1671.8,843 V862 M1683.8,843 V862" stroke="#111" stroke-width="1"/>
<polygon points="1655.8,849 1662,849 1662,856" fill="#777" stroke="#111" stroke-width="0.6" />
<polygon points="1702,849 1694,849 1694,856" fill="#777" stroke="#111" stroke-width="0.6" />
<rect x="1657" y="859" width="42" height="5" fill="#ddd" stroke="#111" stroke-width="0.8" />
<rect x="1659" y="865" width="38" height="8" fill="#e4e4e4" stroke="#111" stroke-width="0.9" />
<path d="M1668,873 H1690 L1686,882 Q1688,888 1687,890 H1680 Q1672,886 1668,873 Z" fill="#d6d6d6" stroke="#111" stroke-width="0.9"/>
<rect x="1636.7" y="831" width="11.3" height="12" fill="#00e000" stroke="#064" stroke-width="1" rx="1"/>
<rect x="1636.7" y="846.3" width="11.3" height="11.3" fill="#00e000" stroke="#064" stroke-width="1" rx="1"/>
<polyline points="1685,889 1728,889" fill="none" stroke="#ffffff" stroke-width="3" stroke-linejoin="miter" stroke-linecap="butt"/>
<polygon points="1728,883.5 1728,894.5 1737.6,889" fill="url(#arrg)" stroke="#fff" stroke-width="1"/>
<rect x="1737.6" y="866.2" width="71.3" height="38.2" fill="#fff" stroke="#000" stroke-width="0.8"/>
<text x="1773" y="882" text-anchor="middle" font-size="14.5" fill="#000">Silo de</text>
<text x="1769" y="900" text-anchor="middle" font-size="14.5" fill="#000">resíduos</text>
<polygon points="1653,123.3 1690.3,100.3 1726.8,123.3" fill="url(#cream)" stroke="#111" stroke-width="1"/>
<rect x="1653" y="123.3" width="73.8" height="127.7" fill="url(#cream)" stroke="#111" stroke-width="1"/>
<line x1="1653" y1="140.5" x2="1726.8" y2="140.5" stroke="#111" stroke-width="1"/>
<polygon points="1653,251 1726.8,251 1708,295.5 1673.7,295.5" fill="url(#cream)" stroke="#111" stroke-width="1"/>
<path d="M1653,156 H1685 V170 L1653,184" fill="none" stroke="#222" stroke-width="1"/>
<polygon points="1691.5,173 1719,213.7 1665,213.7" fill="#ff0" stroke="#000" stroke-width="3.5" stroke-linejoin="miter"/>
<text x="1691.5" y="209" text-anchor="middle" font-size="30" font-weight="bold" fill="#c00" stroke="#300" stroke-width="0.6">!</text>
<rect x="1671.3" y="295" width="38" height="2.8" fill="#000" stroke="none" stroke-width="0" rx="1.4"/>
<rect x="1678.3" y="298.7" width="26" height="2" fill="#fff" stroke="none" stroke-width="0" rx="1"/>
<circle cx="1690.3" cy="312.3" r="13" fill="#dcdcdc" stroke="#000" stroke-width="1.3"/>
<path d="M1694.8,312.3 L1703.3,312.3 M1693.48,315.48 L1699.49,321.49 M1690.3,316.8 L1690.3,325.3 M1687.12,315.48 L1681.11,321.49 M1685.8,312.3 L1677.3,312.3 M1687.12,309.12 L1681.11,303.11 M1690.3,307.8 L1690.3,299.3 M1693.48,309.12 L1699.49,303.11" stroke="#000" stroke-width="1"/>
<circle cx="1690.3" cy="312.3" r="4.5" fill="#6a6a6a" stroke="#000" stroke-width="1"/>
<rect x="1675.5" y="325.3" width="26" height="2" fill="#fff" stroke="none" stroke-width="0" rx="1"/>
<rect x="1671.3" y="327" width="38" height="2.8" fill="#000" stroke="none" stroke-width="0" rx="1.4"/>
<rect x="1511.3" y="97.2" width="43.5" height="19.2" fill="url(#motg)" stroke="#000" stroke-width="1.3" />
<path d="M1515,97.5 h8 v2 h-1.5 v4 h-1.5 v-4 h-2 v4 h-1.5 v-4 h-1.5 Z M1533,97.5 h8.5 v6 h-2 v-4 h-3 v4 h-1.5 v-4 h-2 Z" fill="#000"/>
<line x1="1542.4" y1="98" x2="1542.4" y2="116" stroke="#000" stroke-width="1.6"/>
<line x1="1543.8" y1="100" x2="1543.8" y2="115" stroke="#fff" stroke-width="1" stroke-dasharray="1 1.2"/>
<rect x="1517.2" y="116.4" width="5.3" height="5" fill="#eee" stroke="#000" stroke-width="0.8" />
<rect x="1511.3" y="123" width="27.2" height="17.4" fill="#808080" stroke="#000" stroke-width="1.2" />
<rect x="1512.3" y="124" width="2.5" height="15.4" fill="#e6e6e6" stroke="none" stroke-width="0" />
<rect x="1535" y="124" width="2.5" height="15.4" fill="#d6d6d6" stroke="none" stroke-width="0" />
<rect x="1538.5" y="129.5" width="15.1" height="11" fill="#d8d8d8" stroke="#000" stroke-width="1" />
<rect x="1553.6" y="108.4" width="3" height="33.5" fill="#eee" stroke="#000" stroke-width="0.9" />
<rect x="1552" y="107.5" width="6.2" height="3" fill="#000" stroke="none" stroke-width="0" rx="1.2"/>
<rect x="1556.6" y="121" width="3.5" height="21" fill="#eee" stroke="#000" stroke-width="0.9" />
<rect x="1560" y="124.1" width="15.8" height="15.4" fill="url(#motg)" stroke="#000" stroke-width="1" />
<path d="M1575.8,127 L1581,128.5 L1583.5,131 V134 L1581,136.5 L1575.8,138 Z" fill="#f2f2f2" stroke="#000" stroke-width="0.9"/>
<rect x="1566" y="135.5" width="3" height="7.5" fill="#eee" stroke="#000" stroke-width="0.8" />
<rect x="1505.3" y="143.1" width="70.5" height="3.5" fill="#fff" stroke="#000" stroke-width="1" rx="1"/>
<polyline points="1584,132.5 1653,132.5" fill="none" stroke="#ddd" stroke-width="1.5" stroke-linejoin="miter" stroke-linecap="butt" stroke-dasharray="1.5 1.5"/>
<path d="M1730.85,63.52 H1741.98 V65.2 A21 21 0 1 1 1742.4,100.06 Q1730.85,91.45 1730.85,82 Z" fill="url(#fang)" stroke="#111" stroke-width="1"/>
<rect x="1729.38" y="61.42" width="14.28" height="2.94" fill="#efe8d2" stroke="#111" stroke-width="0.8" />
<circle cx="1755" cy="82" r="14.28" fill="#ede6cc" stroke="#222" stroke-width="0.9" stroke-dasharray="1.2 0.8"/>
<circle cx="1755" cy="82" r="11.76" fill="none" stroke="#8a8270" stroke-width="2.1"/>
<path d="M1757.41,82.74 L1765.03,85.1 M1756.18,84.23 L1759.9,91.29 M1754.26,84.41 L1751.9,92.03 M1752.77,83.18 L1745.71,86.9 M1752.59,81.26 L1744.97,78.9 M1753.82,79.77 L1750.1,72.71 M1755.74,79.59 L1758.1,71.97 M1757.23,80.82 L1764.29,77.1" stroke="#6a6250" stroke-width="1.68"/>
<circle cx="1755" cy="82" r="3.78" fill="#222"/>
<rect x="1743.45" y="101.95" width="21" height="2.73" fill="#8a8270" stroke="#111" stroke-width="0.7" />
<polyline points="1736.3,47 1736.3,61" fill="none" stroke="#ddd" stroke-width="1.3" stroke-linejoin="miter" stroke-linecap="butt" stroke-dasharray="1.5 1.5"/>
<polygon points="1730.8,46 1741.8,46 1736.3,36" fill="url(#arrgu)" stroke="#fff" stroke-width="1"/>
<polyline points="1727,134.3 1748,134.3 1753,128 1753,85" fill="none" stroke="#ddd" stroke-width="1.3" stroke-linejoin="miter" stroke-linecap="butt" stroke-dasharray="1.5 1.5"/>
<polygon points="1686,162.6 1697,157 1697,168" fill="url(#arrg)" stroke="#fff" stroke-width="1"/>
<polyline points="1697,162.6 1740,162.6 1744,167 1744,212" fill="none" stroke="#ddd" stroke-width="1.3" stroke-linejoin="miter" stroke-linecap="butt" stroke-dasharray="1.5 1.5"/>
<polygon points="1738.5,222 1749.5,222 1744,212" fill="url(#arrgu)" stroke="#fff" stroke-width="1"/>
</svg>
<div id="topbar"></div>
<div class="pb" style="left:752px">P1</div>
<div class="pb" style="left:781px">P2</div>
<div class="pb" style="left:810px">P3</div>
<div class="pb" style="left:839px">P4</div>
<div class="pb" style="left:868px">P5</div>
<div class="pb" style="left:897px">P6</div>
<div class="pb" style="left:926px">P7</div>
<div class="lv on" style="left:955.00px"></div>
<div class="lv" style="left:962.15px"></div>
<div class="lv" style="left:969.30px"></div>
<div class="lv" style="left:976.45px"></div>
<div class="lv" style="left:983.60px"></div>
<div class="lv" style="left:990.75px"></div>
<div class="ib" style="left:999px"><svg width="26" height="26" viewBox="0 0 26 26"><polygon points="2,11 5.5,11 10,4 10,24 5.5,17 2,17" fill="#fff"/><path d="M12.5,6.5 Q16,14 12.5,21.5" stroke="#fff" stroke-width="2" fill="none"/><path d="M16.5,4 Q22.5,14 16.5,24" stroke="#fff" stroke-width="2" fill="none"/></svg></div>
<div class="ib" style="left:1028px"><span style="position:absolute;left:6px;top:-2px;font:italic bold 24px 'Liberation Sans',sans-serif;color:#fff">!</span></div>
<div id="rpanel"><svg width="104" height="1040" viewBox="0 0 104 1040"><line x1="33.7" y1="157" x2="33.7" y2="356" stroke="rgb(150,160,170)" stroke-opacity="0.06" stroke-width="2"/><line x1="9.8" y1="606" x2="9.8" y2="873" stroke="rgb(150,160,170)" stroke-opacity="0.08" stroke-width="1"/><line x1="45.1" y1="73" x2="45.1" y2="126" stroke="rgb(150,160,170)" stroke-opacity="0.12" stroke-width="2"/><line x1="12.9" y1="232" x2="12.9" y2="425" stroke="rgb(150,160,170)" stroke-opacity="0.20" stroke-width="2"/><line x1="60.9" y1="52" x2="60.9" y2="139" stroke="rgb(150,160,170)" stroke-opacity="0.14" stroke-width="1"/><line x1="30.1" y1="150" x2="30.1" y2="211" stroke="rgb(150,160,170)" stroke-opacity="0.10" stroke-width="1"/><line x1="10.7" y1="594" x2="10.7" y2="673" stroke="rgb(150,160,170)" stroke-opacity="0.07" stroke-width="1"/><line x1="58.7" y1="644" x2="58.7" y2="803" stroke="rgb(150,160,170)" stroke-opacity="0.14" stroke-width="1"/><line x1="48.4" y1="960" x2="48.4" y2="1084" stroke="rgb(150,160,170)" stroke-opacity="0.09" stroke-width="1"/><line x1="72.7" y1="254" x2="72.7" y2="433" stroke="rgb(150,160,170)" stroke-opacity="0.13" stroke-width="1"/><line x1="75.9" y1="299" x2="75.9" y2="584" stroke="rgb(150,160,170)" stroke-opacity="0.07" stroke-width="1.5"/><line x1="17.2" y1="356" x2="17.2" y2="628" stroke="rgb(150,160,170)" stroke-opacity="0.12" stroke-width="1"/><line x1="79.5" y1="596" x2="79.5" y2="854" stroke="rgb(150,160,170)" stroke-opacity="0.10" stroke-width="1"/><line x1="61.8" y1="603" x2="61.8" y2="752" stroke="rgb(150,160,170)" stroke-opacity="0.18" stroke-width="1"/><line x1="49.3" y1="691" x2="49.3" y2="736" stroke="rgb(150,160,170)" stroke-opacity="0.16" stroke-width="2"/><line x1="103.3" y1="855" x2="103.3" y2="959" stroke="rgb(150,160,170)" stroke-opacity="0.11" stroke-width="1"/><line x1="2.3" y1="480" x2="2.3" y2="554" stroke="rgb(150,160,170)" stroke-opacity="0.07" stroke-width="1"/><line x1="22.7" y1="299" x2="22.7" y2="521" stroke="rgb(150,160,170)" stroke-opacity="0.11" stroke-width="1.5"/><line x1="8.4" y1="467" x2="8.4" y2="640" stroke="rgb(150,160,170)" stroke-opacity="0.19" stroke-width="1.5"/><line x1="89.9" y1="290" x2="89.9" y2="428" stroke="rgb(150,160,170)" stroke-opacity="0.11" stroke-width="1.5"/><line x1="99.6" y1="157" x2="99.6" y2="233" stroke="rgb(150,160,170)" stroke-opacity="0.09" stroke-width="1"/><line x1="1.3" y1="864" x2="1.3" y2="942" stroke="rgb(150,160,170)" stroke-opacity="0.10" stroke-width="1"/><line x1="43.6" y1="384" x2="43.6" y2="561" stroke="rgb(150,160,170)" stroke-opacity="0.20" stroke-width="2"/><line x1="98.8" y1="681" x2="98.8" y2="904" stroke="rgb(150,160,170)" stroke-opacity="0.12" stroke-width="2"/><line x1="40.8" y1="415" x2="40.8" y2="472" stroke="rgb(150,160,170)" stroke-opacity="0.15" stroke-width="1"/><line x1="19.8" y1="1024" x2="19.8" y2="1169" stroke="rgb(150,160,170)" stroke-opacity="0.07" stroke-width="2"/><line x1="5.5" y1="0" x2="5.5" y2="70" stroke="rgb(150,160,170)" stroke-opacity="0.07" stroke-width="1"/><line x1="63.8" y1="73" x2="63.8" y2="157" stroke="rgb(150,160,170)" stroke-opacity="0.11" stroke-width="1"/><line x1="99.4" y1="626" x2="99.4" y2="780" stroke="rgb(150,160,170)" stroke-opacity="0.07" stroke-width="1.5"/><line x1="103.3" y1="485" x2="103.3" y2="640" stroke="rgb(150,160,170)" stroke-opacity="0.06" stroke-width="1"/><line x1="78.0" y1="770" x2="78.0" y2="924" stroke="rgb(150,160,170)" stroke-opacity="0.16" stroke-width="2"/><line x1="2.4" y1="989" x2="2.4" y2="1156" stroke="rgb(150,160,170)" stroke-opacity="0.07" stroke-width="2"/><line x1="95.1" y1="788" x2="95.1" y2="896" stroke="rgb(150,160,170)" stroke-opacity="0.15" stroke-width="1"/><line x1="72.4" y1="272" x2="72.4" y2="397" stroke="rgb(150,160,170)" stroke-opacity="0.08" stroke-width="1"/><line x1="55.4" y1="810" x2="55.4" y2="926" stroke="rgb(150,160,170)" stroke-opacity="0.09" stroke-width="1"/><line x1="83.8" y1="851" x2="83.8" y2="1073" stroke="rgb(150,160,170)" stroke-opacity="0.09" stroke-width="2"/><line x1="51.2" y1="760" x2="51.2" y2="1048" stroke="rgb(150,160,170)" stroke-opacity="0.18" stroke-width="1.5"/><line x1="27.0" y1="720" x2="27.0" y2="999" stroke="rgb(150,160,170)" stroke-opacity="0.12" stroke-width="1"/><line x1="99.3" y1="379" x2="99.3" y2="467" stroke="rgb(150,160,170)" stroke-opacity="0.09" stroke-width="1"/><line x1="35.1" y1="502" x2="35.1" y2="788" stroke="rgb(150,160,170)" stroke-opacity="0.15" stroke-width="1"/><line x1="49.9" y1="679" x2="49.9" y2="917" stroke="rgb(150,160,170)" stroke-opacity="0.06" stroke-width="1"/><line x1="94.6" y1="814" x2="94.6" y2="1039" stroke="rgb(150,160,170)" stroke-opacity="0.13" stroke-width="1"/><line x1="45.1" y1="661" x2="45.1" y2="714" stroke="rgb(150,160,170)" stroke-opacity="0.20" stroke-width="1.5"/><line x1="48.2" y1="773" x2="48.2" y2="825" stroke="rgb(150,160,170)" stroke-opacity="0.08" stroke-width="1"/><line x1="2.9" y1="614" x2="2.9" y2="765" stroke="rgb(150,160,170)" stroke-opacity="0.15" stroke-width="2"/><line x1="86.0" y1="1020" x2="86.0" y2="1220" stroke="rgb(150,160,170)" stroke-opacity="0.11" stroke-width="2"/><line x1="57.0" y1="22" x2="57.0" y2="260" stroke="rgb(150,160,170)" stroke-opacity="0.17" stroke-width="1"/><line x1="54.8" y1="971" x2="54.8" y2="1114" stroke="rgb(150,160,170)" stroke-opacity="0.19" stroke-width="1"/><line x1="2.9" y1="221" x2="2.9" y2="382" stroke="rgb(150,160,170)" stroke-opacity="0.17" stroke-width="1"/><line x1="27.0" y1="436" x2="27.0" y2="500" stroke="rgb(150,160,170)" stroke-opacity="0.20" stroke-width="1"/><line x1="93.4" y1="689" x2="93.4" y2="931" stroke="rgb(150,160,170)" stroke-opacity="0.13" stroke-width="2"/><line x1="13.6" y1="158" x2="13.6" y2="321" stroke="rgb(150,160,170)" stroke-opacity="0.19" stroke-width="1"/><line x1="63.3" y1="807" x2="63.3" y2="876" stroke="rgb(150,160,170)" stroke-opacity="0.07" stroke-width="2"/><line x1="75.4" y1="579" x2="75.4" y2="693" stroke="rgb(150,160,170)" stroke-opacity="0.13" stroke-width="2"/><line x1="50.2" y1="808" x2="50.2" y2="1067" stroke="rgb(150,160,170)" stroke-opacity="0.06" stroke-width="1"/><line x1="28.8" y1="803" x2="28.8" y2="965" stroke="rgb(150,160,170)" stroke-opacity="0.14" stroke-width="1"/><line x1="46.1" y1="637" x2="46.1" y2="798" stroke="rgb(150,160,170)" stroke-opacity="0.13" stroke-width="1"/><line x1="47.0" y1="555" x2="47.0" y2="709" stroke="rgb(150,160,170)" stroke-opacity="0.20" stroke-width="2"/><line x1="91.2" y1="980" x2="91.2" y2="1077" stroke="rgb(150,160,170)" stroke-opacity="0.14" stroke-width="1"/><line x1="87.4" y1="143" x2="87.4" y2="204" stroke="rgb(150,160,170)" stroke-opacity="0.12" stroke-width="1"/><line x1="69.8" y1="445" x2="69.8" y2="531" stroke="rgb(150,160,170)" stroke-opacity="0.10" stroke-width="1"/><line x1="93.3" y1="161" x2="93.3" y2="377" stroke="rgb(150,160,170)" stroke-opacity="0.16" stroke-width="1"/><line x1="26.3" y1="143" x2="26.3" y2="294" stroke="rgb(150,160,170)" stroke-opacity="0.17" stroke-width="1"/><line x1="41.4" y1="507" x2="41.4" y2="794" stroke="rgb(150,160,170)" stroke-opacity="0.18" stroke-width="1"/><line x1="73.5" y1="1034" x2="73.5" y2="1169" stroke="rgb(150,160,170)" stroke-opacity="0.12" stroke-width="1"/><line x1="33.1" y1="751" x2="33.1" y2="786" stroke="rgb(150,160,170)" stroke-opacity="0.14" stroke-width="1.5"/><line x1="73.1" y1="400" x2="73.1" y2="564" stroke="rgb(150,160,170)" stroke-opacity="0.10" stroke-width="1"/><line x1="11.7" y1="955" x2="11.7" y2="1045" stroke="rgb(150,160,170)" stroke-opacity="0.19" stroke-width="1"/><line x1="27.6" y1="41" x2="27.6" y2="274" stroke="rgb(150,160,170)" stroke-opacity="0.09" stroke-width="1"/><line x1="85.3" y1="884" x2="85.3" y2="1089" stroke="rgb(150,160,170)" stroke-opacity="0.20" stroke-width="1.5"/><line x1="15.5" y1="956" x2="15.5" y2="1134" stroke="rgb(150,160,170)" stroke-opacity="0.16" stroke-width="1"/><line x1="29.0" y1="832" x2="29.0" y2="909" stroke="rgb(150,160,170)" stroke-opacity="0.19" stroke-width="1"/><line x1="97.6" y1="660" x2="97.6" y2="898" stroke="rgb(150,160,170)" stroke-opacity="0.06" stroke-width="1"/><line x1="6.9" y1="897" x2="6.9" y2="1045" stroke="rgb(150,160,170)" stroke-opacity="0.10" stroke-width="2"/><line x1="43.4" y1="952" x2="43.4" y2="1144" stroke="rgb(150,160,170)" stroke-opacity="0.06" stroke-width="1"/><line x1="97.6" y1="1008" x2="97.6" y2="1106" stroke="rgb(150,160,170)" stroke-opacity="0.08" stroke-width="1"/><line x1="65.4" y1="552" x2="65.4" y2="636" stroke="rgb(150,160,170)" stroke-opacity="0.12" stroke-width="1"/><line x1="28.1" y1="836" x2="28.1" y2="1124" stroke="rgb(150,160,170)" stroke-opacity="0.06" stroke-width="1"/><line x1="76.2" y1="573" x2="76.2" y2="652" stroke="rgb(150,160,170)" stroke-opacity="0.13" stroke-width="1.5"/><line x1="11.1" y1="852" x2="11.1" y2="994" stroke="rgb(150,160,170)" stroke-opacity="0.13" stroke-width="1.5"/><line x1="100.9" y1="320" x2="100.9" y2="406" stroke="rgb(150,160,170)" stroke-opacity="0.09" stroke-width="1"/><line x1="86.6" y1="735" x2="86.6" y2="930" stroke="rgb(150,160,170)" stroke-opacity="0.11" stroke-width="1"/><line x1="102.1" y1="870" x2="102.1" y2="904" stroke="rgb(150,160,170)" stroke-opacity="0.15" stroke-width="1"/><line x1="44.8" y1="58" x2="44.8" y2="261" stroke="rgb(150,160,170)" stroke-opacity="0.11" stroke-width="2"/><line x1="69.7" y1="293" x2="69.7" y2="386" stroke="rgb(150,160,170)" stroke-opacity="0.10" stroke-width="1.5"/><line x1="19.3" y1="280" x2="19.3" y2="311" stroke="rgb(150,160,170)" stroke-opacity="0.11" stroke-width="1"/><line x1="101.2" y1="569" x2="101.2" y2="663" stroke="rgb(150,160,170)" stroke-opacity="0.20" stroke-width="1"/><line x1="22.7" y1="190" x2="22.7" y2="307" stroke="rgb(150,160,170)" stroke-opacity="0.06" stroke-width="1"/><line x1="52.3" y1="209" x2="52.3" y2="370" stroke="rgb(150,160,170)" stroke-opacity="0.05" stroke-width="1"/><line x1="85.0" y1="150" x2="85.0" y2="332" stroke="rgb(150,160,170)" stroke-opacity="0.11" stroke-width="1"/><line x1="31.6" y1="242" x2="31.6" y2="424" stroke="rgb(150,160,170)" stroke-opacity="0.13" stroke-width="1"/><line x1="68.4" y1="745" x2="68.4" y2="1003" stroke="rgb(150,160,170)" stroke-opacity="0.11" stroke-width="1"/><line x1="75.0" y1="514" x2="75.0" y2="618" stroke="rgb(150,160,170)" stroke-opacity="0.15" stroke-width="1"/><line x1="4.6" y1="869" x2="4.6" y2="1131" stroke="rgb(150,160,170)" stroke-opacity="0.15" stroke-width="2"/><line x1="14.5" y1="545" x2="14.5" y2="706" stroke="rgb(150,160,170)" stroke-opacity="0.18" stroke-width="1"/><line x1="85.9" y1="607" x2="85.9" y2="870" stroke="rgb(150,160,170)" stroke-opacity="0.16" stroke-width="1"/><line x1="8.8" y1="44" x2="8.8" y2="239" stroke="rgb(150,160,170)" stroke-opacity="0.20" stroke-width="1.5"/><line x1="86.9" y1="581" x2="86.9" y2="774" stroke="rgb(150,160,170)" stroke-opacity="0.15" stroke-width="1"/><line x1="50.9" y1="3" x2="50.9" y2="241" stroke="rgb(150,160,170)" stroke-opacity="0.17" stroke-width="2"/><line x1="93.4" y1="96" x2="93.4" y2="262" stroke="rgb(150,160,170)" stroke-opacity="0.17" stroke-width="1.5"/><line x1="26.2" y1="77" x2="26.2" y2="176" stroke="rgb(150,160,170)" stroke-opacity="0.17" stroke-width="1"/><line x1="24.0" y1="676" x2="24.0" y2="826" stroke="rgb(150,160,170)" stroke-opacity="0.19" stroke-width="1"/><line x1="49.8" y1="711" x2="49.8" y2="940" stroke="rgb(150,160,170)" stroke-opacity="0.15" stroke-width="1"/><line x1="8.1" y1="153" x2="8.1" y2="249" stroke="rgb(150,160,170)" stroke-opacity="0.17" stroke-width="1"/><line x1="64.6" y1="139" x2="64.6" y2="294" stroke="rgb(150,160,170)" stroke-opacity="0.13" stroke-width="1"/><line x1="72.0" y1="703" x2="72.0" y2="808" stroke="rgb(150,160,170)" stroke-opacity="0.13" stroke-width="1.5"/><line x1="48.5" y1="798" x2="48.5" y2="1086" stroke="rgb(150,160,170)" stroke-opacity="0.14" stroke-width="1"/><line x1="101.7" y1="974" x2="101.7" y2="1008" stroke="rgb(150,160,170)" stroke-opacity="0.12" stroke-width="2"/><line x1="100.7" y1="467" x2="100.7" y2="567" stroke="rgb(150,160,170)" stroke-opacity="0.08" stroke-width="1"/><line x1="7.8" y1="94" x2="7.8" y2="318" stroke="rgb(150,160,170)" stroke-opacity="0.09" stroke-width="1"/><line x1="13.8" y1="853" x2="13.8" y2="1015" stroke="rgb(150,160,170)" stroke-opacity="0.19" stroke-width="1"/><line x1="24.1" y1="934" x2="24.1" y2="1090" stroke="rgb(150,160,170)" stroke-opacity="0.05" stroke-width="1"/><line x1="98.8" y1="709" x2="98.8" y2="844" stroke="rgb(150,160,170)" stroke-opacity="0.17" stroke-width="1.5"/><line x1="35.8" y1="329" x2="35.8" y2="577" stroke="rgb(150,160,170)" stroke-opacity="0.05" stroke-width="1"/><line x1="87.3" y1="125" x2="87.3" y2="396" stroke="rgb(150,160,170)" stroke-opacity="0.16" stroke-width="1"/><line x1="26.3" y1="68" x2="26.3" y2="199" stroke="rgb(150,160,170)" stroke-opacity="0.19" stroke-width="1"/><line x1="37.5" y1="445" x2="37.5" y2="547" stroke="rgb(150,160,170)" stroke-opacity="0.06" stroke-width="1"/><line x1="5.4" y1="688" x2="5.4" y2="884" stroke="rgb(150,160,170)" stroke-opacity="0.07" stroke-width="1"/><line x1="45.4" y1="328" x2="45.4" y2="559" stroke="rgb(150,160,170)" stroke-opacity="0.18" stroke-width="1.5"/><line x1="92.0" y1="844" x2="92.0" y2="1038" stroke="rgb(150,160,170)" stroke-opacity="0.20" stroke-width="2"/><line x1="57.1" y1="748" x2="57.1" y2="791" stroke="rgb(150,160,170)" stroke-opacity="0.17" stroke-width="1.5"/><line x1="64.0" y1="144" x2="64.0" y2="400" stroke="rgb(150,160,170)" stroke-opacity="0.13" stroke-width="2"/><line x1="13.2" y1="491" x2="13.2" y2="610" stroke="rgb(150,160,170)" stroke-opacity="0.10" stroke-width="1"/><line x1="42.2" y1="248" x2="42.2" y2="404" stroke="rgb(150,160,170)" stroke-opacity="0.16" stroke-width="1"/><line x1="17.4" y1="168" x2="17.4" y2="252" stroke="rgb(150,160,170)" stroke-opacity="0.19" stroke-width="1.5"/><line x1="57.2" y1="471" x2="57.2" y2="588" stroke="rgb(150,160,170)" stroke-opacity="0.17" stroke-width="1.5"/><line x1="14.5" y1="200" x2="14.5" y2="254" stroke="rgb(150,160,170)" stroke-opacity="0.10" stroke-width="1"/><line x1="33.2" y1="383" x2="33.2" y2="623" stroke="rgb(150,160,170)" stroke-opacity="0.08" stroke-width="1"/><line x1="78.0" y1="429" x2="78.0" y2="567" stroke="rgb(150,160,170)" stroke-opacity="0.13" stroke-width="1.5"/><line x1="28.1" y1="782" x2="28.1" y2="942" stroke="rgb(150,160,170)" stroke-opacity="0.14" stroke-width="1"/><line x1="13.1" y1="524" x2="13.1" y2="717" stroke="rgb(150,160,170)" stroke-opacity="0.19" stroke-width="1"/><line x1="9.6" y1="933" x2="9.6" y2="1063" stroke="rgb(150,160,170)" stroke-opacity="0.15" stroke-width="1.5"/><line x1="99.2" y1="883" x2="99.2" y2="1140" stroke="rgb(150,160,170)" stroke-opacity="0.05" stroke-width="1"/><line x1="44.2" y1="794" x2="44.2" y2="1033" stroke="rgb(150,160,170)" stroke-opacity="0.20" stroke-width="1.5"/><line x1="0.0" y1="407" x2="0.0" y2="678" stroke="rgb(150,160,170)" stroke-opacity="0.18" stroke-width="1.5"/><line x1="101.1" y1="258" x2="101.1" y2="317" stroke="rgb(150,160,170)" stroke-opacity="0.07" stroke-width="2"/><line x1="101.1" y1="113" x2="101.1" y2="358" stroke="rgb(150,160,170)" stroke-opacity="0.16" stroke-width="1.5"/><line x1="8.8" y1="808" x2="8.8" y2="838" stroke="rgb(150,160,170)" stroke-opacity="0.07" stroke-width="2"/><line x1="95.7" y1="671" x2="95.7" y2="780" stroke="rgb(150,160,170)" stroke-opacity="0.07" stroke-width="1"/><line x1="54.9" y1="455" x2="54.9" y2="684" stroke="rgb(150,160,170)" stroke-opacity="0.07" stroke-width="1"/><line x1="54.5" y1="606" x2="54.5" y2="737" stroke="rgb(150,160,170)" stroke-opacity="0.09" stroke-width="2"/><line x1="0.1" y1="559" x2="0.1" y2="848" stroke="rgb(150,160,170)" stroke-opacity="0.09" stroke-width="1"/><line x1="67.0" y1="919" x2="67.0" y2="1073" stroke="rgb(150,160,170)" stroke-opacity="0.09" stroke-width="1"/><line x1="3.0" y1="428" x2="3.0" y2="627" stroke="rgb(150,160,170)" stroke-opacity="0.06" stroke-width="1"/><line x1="51.8" y1="701" x2="51.8" y2="841" stroke="rgb(150,160,170)" stroke-opacity="0.09" stroke-width="1.5"/><line x1="96.2" y1="236" x2="96.2" y2="275" stroke="rgb(150,160,170)" stroke-opacity="0.10" stroke-width="1.5"/><line x1="37.7" y1="412" x2="37.7" y2="444" stroke="rgb(150,160,170)" stroke-opacity="0.10" stroke-width="2"/><line x1="7.0" y1="516" x2="7.0" y2="598" stroke="rgb(150,160,170)" stroke-opacity="0.17" stroke-width="1"/><line x1="24.0" y1="230" x2="24.0" y2="458" stroke="rgb(150,160,170)" stroke-opacity="0.10" stroke-width="2"/><line x1="51.6" y1="195" x2="51.6" y2="283" stroke="rgb(150,160,170)" stroke-opacity="0.12" stroke-width="1"/><line x1="98.7" y1="152" x2="98.7" y2="285" stroke="rgb(150,160,170)" stroke-opacity="0.08" stroke-width="2"/><line x1="14.8" y1="54" x2="14.8" y2="100" stroke="rgb(150,160,170)" stroke-opacity="0.11" stroke-width="1"/><line x1="76.2" y1="1037" x2="76.2" y2="1310" stroke="rgb(150,160,170)" stroke-opacity="0.10" stroke-width="1"/><line x1="67.9" y1="546" x2="67.9" y2="697" stroke="rgb(150,160,170)" stroke-opacity="0.10" stroke-width="1.5"/><line x1="87.3" y1="1024" x2="87.3" y2="1169" stroke="rgb(150,160,170)" stroke-opacity="0.07" stroke-width="1"/><line x1="29.1" y1="366" x2="29.1" y2="644" stroke="rgb(150,160,170)" stroke-opacity="0.07" stroke-width="1"/><line x1="39.5" y1="799" x2="39.5" y2="910" stroke="rgb(150,160,170)" stroke-opacity="0.18" stroke-width="1"/><line x1="5.1" y1="492" x2="5.1" y2="619" stroke="rgb(150,160,170)" stroke-opacity="0.20" stroke-width="1"/><line x1="33.6" y1="767" x2="33.6" y2="920" stroke="rgb(150,160,170)" stroke-opacity="0.15" stroke-width="1"/><line x1="84.4" y1="797" x2="84.4" y2="838" stroke="rgb(150,160,170)" stroke-opacity="0.06" stroke-width="1"/><line x1="83.5" y1="64" x2="83.5" y2="145" stroke="rgb(150,160,170)" stroke-opacity="0.06" stroke-width="2"/><line x1="35.3" y1="283" x2="35.3" y2="562" stroke="rgb(150,160,170)" stroke-opacity="0.15" stroke-width="1"/><line x1="77.6" y1="717" x2="77.6" y2="987" stroke="rgb(150,160,170)" stroke-opacity="0.10" stroke-width="2"/><line x1="95.3" y1="659" x2="95.3" y2="935" stroke="rgb(150,160,170)" stroke-opacity="0.05" stroke-width="1"/><line x1="11.2" y1="744" x2="11.2" y2="895" stroke="rgb(150,160,170)" stroke-opacity="0.17" stroke-width="1"/><line x1="95.0" y1="847" x2="95.0" y2="912" stroke="rgb(150,160,170)" stroke-opacity="0.13" stroke-width="1"/><line x1="83.5" y1="768" x2="83.5" y2="1012" stroke="rgb(150,160,170)" stroke-opacity="0.17" stroke-width="2"/><line x1="24.6" y1="896" x2="24.6" y2="1045" stroke="rgb(150,160,170)" stroke-opacity="0.18" stroke-width="2"/><line x1="8.2" y1="205" x2="8.2" y2="431" stroke="rgb(150,160,170)" stroke-opacity="0.09" stroke-width="1"/><line x1="67.6" y1="501" x2="67.6" y2="673" stroke="rgb(150,160,170)" stroke-opacity="0.08" stroke-width="1.5"/><line x1="91.9" y1="1027" x2="91.9" y2="1126" stroke="rgb(150,160,170)" stroke-opacity="0.06" stroke-width="1"/><line x1="43.8" y1="1028" x2="43.8" y2="1311" stroke="rgb(150,160,170)" stroke-opacity="0.08" stroke-width="1"/><line x1="43.4" y1="645" x2="43.4" y2="850" stroke="rgb(150,160,170)" stroke-opacity="0.17" stroke-width="1"/><line x1="81.1" y1="306" x2="81.1" y2="408" stroke="rgb(150,160,170)" stroke-opacity="0.09" stroke-width="1"/><line x1="76.8" y1="207" x2="76.8" y2="301" stroke="rgb(150,160,170)" stroke-opacity="0.09" stroke-width="1"/><line x1="29.3" y1="944" x2="29.3" y2="1023" stroke="rgb(150,160,170)" stroke-opacity="0.06" stroke-width="1"/><line x1="103.2" y1="528" x2="103.2" y2="618" stroke="rgb(150,160,170)" stroke-opacity="0.18" stroke-width="1.5"/><line x1="103.1" y1="106" x2="103.1" y2="260" stroke="rgb(150,160,170)" stroke-opacity="0.18" stroke-width="1.5"/><line x1="95.1" y1="42" x2="95.1" y2="148" stroke="rgb(150,160,170)" stroke-opacity="0.07" stroke-width="1"/><line x1="62.5" y1="861" x2="62.5" y2="942" stroke="rgb(150,160,170)" stroke-opacity="0.06" stroke-width="2"/><line x1="90.1" y1="467" x2="90.1" y2="565" stroke="rgb(150,160,170)" stroke-opacity="0.17" stroke-width="1"/><line x1="11.0" y1="620" x2="11.0" y2="811" stroke="rgb(150,160,170)" stroke-opacity="0.08" stroke-width="1"/><line x1="35.4" y1="46" x2="35.4" y2="336" stroke="rgb(150,160,170)" stroke-opacity="0.06" stroke-width="1"/><line x1="84.7" y1="852" x2="84.7" y2="988" stroke="rgb(150,160,170)" stroke-opacity="0.11" stroke-width="2"/><line x1="32.5" y1="212" x2="32.5" y2="448" stroke="rgb(150,160,170)" stroke-opacity="0.14" stroke-width="1"/><line x1="42.4" y1="828" x2="42.4" y2="1030" stroke="rgb(150,160,170)" stroke-opacity="0.07" stroke-width="2"/><line x1="9.5" y1="170" x2="9.5" y2="381" stroke="rgb(150,160,170)" stroke-opacity="0.12" stroke-width="1"/><line x1="69.5" y1="435" x2="69.5" y2="478" stroke="rgb(150,160,170)" stroke-opacity="0.17" stroke-width="1"/><line x1="43.1" y1="19" x2="43.1" y2="248" stroke="rgb(150,160,170)" stroke-opacity="0.18" stroke-width="1"/><line x1="40.6" y1="421" x2="40.6" y2="696" stroke="rgb(150,160,170)" stroke-opacity="0.12" stroke-width="1"/><line x1="44.1" y1="853" x2="44.1" y2="989" stroke="rgb(150,160,170)" stroke-opacity="0.19" stroke-width="1.5"/><line x1="80.4" y1="135" x2="80.4" y2="179" stroke="rgb(150,160,170)" stroke-opacity="0.07" stroke-width="1.5"/><line x1="9.3" y1="647" x2="9.3" y2="774" stroke="rgb(150,160,170)" stroke-opacity="0.13" stroke-width="1"/><line x1="36.2" y1="168" x2="36.2" y2="243" stroke="rgb(150,160,170)" stroke-opacity="0.06" stroke-width="1.5"/><line x1="51.0" y1="837" x2="51.0" y2="1118" stroke="rgb(150,160,170)" stroke-opacity="0.08" stroke-width="1"/><line x1="87.1" y1="45" x2="87.1" y2="313" stroke="rgb(150,160,170)" stroke-opacity="0.10" stroke-width="2"/><line x1="96.3" y1="403" x2="96.3" y2="669" stroke="rgb(150,160,170)" stroke-opacity="0.15" stroke-width="1"/><line x1="66.6" y1="891" x2="66.6" y2="1082" stroke="rgb(150,160,170)" stroke-opacity="0.15" stroke-width="1"/><line x1="86.2" y1="190" x2="86.2" y2="277" stroke="rgb(150,160,170)" stroke-opacity="0.11" stroke-width="2"/><line x1="16.3" y1="374" x2="16.3" y2="442" stroke="rgb(150,160,170)" stroke-opacity="0.21" stroke-width="1"/><line x1="4.3" y1="585" x2="4.3" y2="812" stroke="rgb(150,160,170)" stroke-opacity="0.06" stroke-width="1"/><line x1="12.2" y1="624" x2="12.2" y2="797" stroke="rgb(150,160,170)" stroke-opacity="0.15" stroke-width="1"/><line x1="67.5" y1="321" x2="67.5" y2="415" stroke="rgb(150,160,170)" stroke-opacity="0.11" stroke-width="1"/><line x1="46.5" y1="456" x2="46.5" y2="492" stroke="rgb(150,160,170)" stroke-opacity="0.15" stroke-width="1.5"/><line x1="48.4" y1="465" x2="48.4" y2="656" stroke="rgb(150,160,170)" stroke-opacity="0.18" stroke-width="1"/><line x1="84.3" y1="416" x2="84.3" y2="464" stroke="rgb(150,160,170)" stroke-opacity="0.11" stroke-width="1"/><line x1="9.5" y1="460" x2="9.5" y2="622" stroke="rgb(150,160,170)" stroke-opacity="0.06" stroke-width="1"/><line x1="8.6" y1="763" x2="8.6" y2="995" stroke="rgb(150,160,170)" stroke-opacity="0.13" stroke-width="1"/><line x1="78.2" y1="931" x2="78.2" y2="1130" stroke="rgb(150,160,170)" stroke-opacity="0.18" stroke-width="1"/><line x1="89.1" y1="1036" x2="89.1" y2="1256" stroke="rgb(150,160,170)" stroke-opacity="0.18" stroke-width="1"/><line x1="13.7" y1="921" x2="13.7" y2="1026" stroke="rgb(150,160,170)" stroke-opacity="0.18" stroke-width="1"/><line x1="71.4" y1="750" x2="71.4" y2="837" stroke="rgb(150,160,170)" stroke-opacity="0.18" stroke-width="2"/><line x1="78.6" y1="165" x2="78.6" y2="428" stroke="rgb(150,160,170)" stroke-opacity="0.09" stroke-width="1.5"/><line x1="14.9" y1="522" x2="14.9" y2="791" stroke="rgb(150,160,170)" stroke-opacity="0.08" stroke-width="1"/><line x1="64.1" y1="247" x2="64.1" y2="374" stroke="rgb(150,160,170)" stroke-opacity="0.08" stroke-width="1.5"/><line x1="16.8" y1="974" x2="16.8" y2="1181" stroke="rgb(150,160,170)" stroke-opacity="0.19" stroke-width="1"/><line x1="82.4" y1="275" x2="82.4" y2="505" stroke="rgb(150,160,170)" stroke-opacity="0.06" stroke-width="1"/><line x1="100.5" y1="471" x2="100.5" y2="637" stroke="rgb(150,160,170)" stroke-opacity="0.16" stroke-width="1"/><line x1="26.2" y1="557" x2="26.2" y2="810" stroke="rgb(150,160,170)" stroke-opacity="0.17" stroke-width="1"/><line x1="27.5" y1="1030" x2="27.5" y2="1210" stroke="rgb(150,160,170)" stroke-opacity="0.11" stroke-width="1"/><line x1="46.0" y1="184" x2="46.0" y2="407" stroke="rgb(150,160,170)" stroke-opacity="0.06" stroke-width="2"/><line x1="26.4" y1="665" x2="26.4" y2="951" stroke="rgb(150,160,170)" stroke-opacity="0.14" stroke-width="1"/><line x1="76.2" y1="777" x2="76.2" y2="865" stroke="rgb(150,160,170)" stroke-opacity="0.10" stroke-width="1.5"/><line x1="43.4" y1="379" x2="43.4" y2="421" stroke="rgb(150,160,170)" stroke-opacity="0.13" stroke-width="2"/><line x1="67.9" y1="23" x2="67.9" y2="54" stroke="rgb(150,160,170)" stroke-opacity="0.11" stroke-width="1"/><line x1="54.4" y1="555" x2="54.4" y2="693" stroke="rgb(150,160,170)" stroke-opacity="0.10" stroke-width="1"/><line x1="21.2" y1="649" x2="21.2" y2="802" stroke="rgb(150,160,170)" stroke-opacity="0.07" stroke-width="1"/><line x1="73.6" y1="469" x2="73.6" y2="515" stroke="rgb(150,160,170)" stroke-opacity="0.07" stroke-width="1"/><line x1="41.8" y1="275" x2="41.8" y2="308" stroke="rgb(150,160,170)" stroke-opacity="0.15" stroke-width="2"/><line x1="92.8" y1="619" x2="92.8" y2="799" stroke="rgb(150,160,170)" stroke-opacity="0.15" stroke-width="2"/><line x1="76.3" y1="258" x2="76.3" y2="523" stroke="rgb(150,160,170)" stroke-opacity="0.06" stroke-width="2"/><line x1="2.6" y1="193" x2="2.6" y2="264" stroke="rgb(150,160,170)" stroke-opacity="0.20" stroke-width="1"/><line x1="1.3" y1="573" x2="1.3" y2="848" stroke="rgb(150,160,170)" stroke-opacity="0.07" stroke-width="1"/><line x1="53.9" y1="668" x2="53.9" y2="867" stroke="rgb(150,160,170)" stroke-opacity="0.12" stroke-width="2"/><line x1="18.2" y1="322" x2="18.2" y2="430" stroke="rgb(150,160,170)" stroke-opacity="0.06" stroke-width="1.5"/><line x1="74.4" y1="7" x2="74.4" y2="256" stroke="rgb(150,160,170)" stroke-opacity="0.17" stroke-width="1.5"/><line x1="8.4" y1="682" x2="8.4" y2="757" stroke="rgb(150,160,170)" stroke-opacity="0.21" stroke-width="1"/><line x1="24.2" y1="40" x2="24.2" y2="158" stroke="rgb(150,160,170)" stroke-opacity="0.17" stroke-width="1"/><line x1="74.0" y1="277" x2="74.0" y2="451" stroke="rgb(150,160,170)" stroke-opacity="0.12" stroke-width="2"/><line x1="101.1" y1="307" x2="101.1" y2="579" stroke="rgb(150,160,170)" stroke-opacity="0.19" stroke-width="1"/><line x1="91.5" y1="16" x2="91.5" y2="114" stroke="rgb(150,160,170)" stroke-opacity="0.09" stroke-width="1"/><line x1="98.2" y1="776" x2="98.2" y2="891" stroke="rgb(150,160,170)" stroke-opacity="0.19" stroke-width="1"/><line x1="62.5" y1="395" x2="62.5" y2="646" stroke="rgb(150,160,170)" stroke-opacity="0.20" stroke-width="2"/><line x1="48.8" y1="873" x2="48.8" y2="1085" stroke="rgb(150,160,170)" stroke-opacity="0.19" stroke-width="1.5"/><line x1="99.4" y1="243" x2="99.4" y2="503" stroke="rgb(150,160,170)" stroke-opacity="0.18" stroke-width="1.5"/><line x1="64.8" y1="81" x2="64.8" y2="348" stroke="rgb(150,160,170)" stroke-opacity="0.07" stroke-width="1"/><line x1="11.6" y1="647" x2="11.6" y2="719" stroke="rgb(150,160,170)" stroke-opacity="0.21" stroke-width="1"/><line x1="3.2" y1="144" x2="3.2" y2="341" stroke="rgb(150,160,170)" stroke-opacity="0.06" stroke-width="1"/><line x1="76.6" y1="68" x2="76.6" y2="252" stroke="rgb(150,160,170)" stroke-opacity="0.11" stroke-width="2"/><line x1="92.7" y1="69" x2="92.7" y2="324" stroke="rgb(150,160,170)" stroke-opacity="0.20" stroke-width="1.5"/><line x1="11.1" y1="214" x2="11.1" y2="273" stroke="rgb(150,160,170)" stroke-opacity="0.06" stroke-width="1"/><line x1="85.8" y1="657" x2="85.8" y2="762" stroke="rgb(150,160,170)" stroke-opacity="0.07" stroke-width="1"/><line x1="82.4" y1="672" x2="82.4" y2="779" stroke="rgb(150,160,170)" stroke-opacity="0.10" stroke-width="1"/><line x1="2.2" y1="267" x2="2.2" y2="370" stroke="rgb(150,160,170)" stroke-opacity="0.16" stroke-width="1"/><line x1="94.7" y1="800" x2="94.7" y2="987" stroke="rgb(150,160,170)" stroke-opacity="0.13" stroke-width="1"/><line x1="64.3" y1="32" x2="64.3" y2="170" stroke="rgb(150,160,170)" stroke-opacity="0.12" stroke-width="1"/><line x1="36.1" y1="733" x2="36.1" y2="903" stroke="rgb(150,160,170)" stroke-opacity="0.08" stroke-width="1"/><line x1="59.8" y1="299" x2="59.8" y2="442" stroke="rgb(150,160,170)" stroke-opacity="0.13" stroke-width="1"/><line x1="79.3" y1="1017" x2="79.3" y2="1048" stroke="rgb(150,160,170)" stroke-opacity="0.13" stroke-width="1.5"/><line x1="72.3" y1="858" x2="72.3" y2="1140" stroke="rgb(150,160,170)" stroke-opacity="0.14" stroke-width="2"/></svg></div>
<div class="rb sel" style="top:1px;height:50px"><div class="rt" style="top:12.0px">P1</div><div class="rs" style="top:29.0px">1ª Limpeza</div></div>
<div class="rb " style="top:53.5px;height:35.5px;line-height:31.5px">Start</div>
<div class="rb " style="top:91.7px;height:33.7px;line-height:29.700000000000003px">Stop</div>
<div class="rb " style="top:127.8px;height:33.2px;line-height:29.200000000000003px">Proxima</div>
<div class="rb sel2" style="top:163.7px;height:29.30000000000001px;line-height:25.30000000000001px"><span style="color:#ff0">Auto</span></div>
<div class="mg" style="top:196px">7</div>
<div class="mg" style="top:218px">0</div>
<div class="mg" style="top:240px">0</div>
<div class="mg" style="top:262px">0</div>
<div id="semsel">Sem Selecção</div>
<div class="rb " style="top:458.5px;height:49.5px"><div class="rt" style="top:11.8px">P2</div><div class="rs" style="top:28.8px">2 ª Limpeza</div></div>
<div class="rb " style="top:512px;height:34.5px;line-height:30.5px">Start</div>
<div class="rb " style="top:550.7px;height:33.299999999999955px;line-height:29.299999999999955px">Stop</div>
<div class="rb sel2" style="top:589.6px;height:29.399999999999977px;line-height:25.399999999999977px"><span style="color:#ff0">Auto</span></div>
<div class="rb " style="top:742px;height:48.700000000000045px"><div class="rt" style="top:11.4px">P7</div><div class="rs" style="top:28.4px">Resíduos</div></div>
<div class="rb " style="top:797.6px;height:34.39999999999998px;line-height:30.399999999999977px">Start</div>
<div class="rb " style="top:837.8px;height:33.200000000000045px;line-height:29.200000000000045px">Stop</div>
<div class="rb sel2" style="top:874.8px;height:29.200000000000045px;line-height:25.200000000000045px"><span style="color:#ff0">Auto</span></div>
<div id="bbar"></div>
<svg style="position:absolute;left:0;top:1042px" width="140" height="38" viewBox="0 1042 140 38"><ellipse cx="30.8" cy="1061" rx="27" ry="17.5" transform="rotate(14 30.8 1061)" fill="#0b5aa8"/><circle cx="31" cy="1061.3" r="13.8" fill="#fff"/><circle cx="31.2" cy="1061.5" r="10.5" fill="#1a1a1a"/><circle cx="38.3" cy="1057.5" r="3.8" fill="#fff"/><text x="70" y="1071" font-family="Liberation Sans" font-weight="bold" font-size="26" fill="#000" letter-spacing="1.6">NVC</text></svg>
<div class="nb" style="left:142px;letter-spacing:1.1px">Inicio</div>
<div class="nb blue" style="left:282px;letter-spacing:1.1px">Limpeza</div>
<div class="nb" style="left:422px;letter-spacing:1.1px">Moagem</div>
<div class="nb" style="left:562px;letter-spacing:0.3px">Silos de Farinha</div>
<div class="nb" style="left:702px;letter-spacing:1.1px">Legendas</div>
<div class="nb" style="left:842px;letter-spacing:1.1px">Alarmes</div>
<div class="nb" style="left:982px;letter-spacing:1.1px">Gráfico</div>
<div class="nb mag" style="left:1122px;width:193px"><span style="position:absolute;left:0;width:77px;text-align:center;letter-spacing:1.1px">User</span><div class="opdiv"></div><div class="op">operador</div></div>
<div class="datebox">22-Mar-17 6:55:01 PM</div>
<div class="emerg">EMERGÊNCIA</div>
<svg style="position:absolute;left:1815px;top:1042px" width="105" height="38" viewBox="1815 1042 105 38"><path d="M1844.5,1043 H1836 Q1823,1043 1823,1056 V1063 Q1823,1076 1836,1076 H1844.5 V1068.5 H1838 Q1831,1068.5 1831,1062 V1057 Q1831,1050.5 1838,1050.5 H1844.5 Z" fill="#07507a"/><path d="M1860.4,1043 H1853 Q1840.4,1043 1840.4,1056 V1063 Q1840.4,1076 1853,1076 H1860.4 V1068.5 H1855 Q1848.5,1068.5 1848.5,1062 V1057 Q1848.5,1050.5 1855,1050.5 H1860.4 Z" fill="#b8c400"/><text x="1852" y="1063" font-family="Liberation Sans" font-size="11" fill="#143860" textLength="30" lengthAdjust="spacingAndGlyphs">carneiro</text><text x="1882" y="1063" font-family="Liberation Sans" font-size="11" fill="#a9b43a" textLength="31" lengthAdjust="spacingAndGlyphs">campos</text></svg>
</div></body></html>
